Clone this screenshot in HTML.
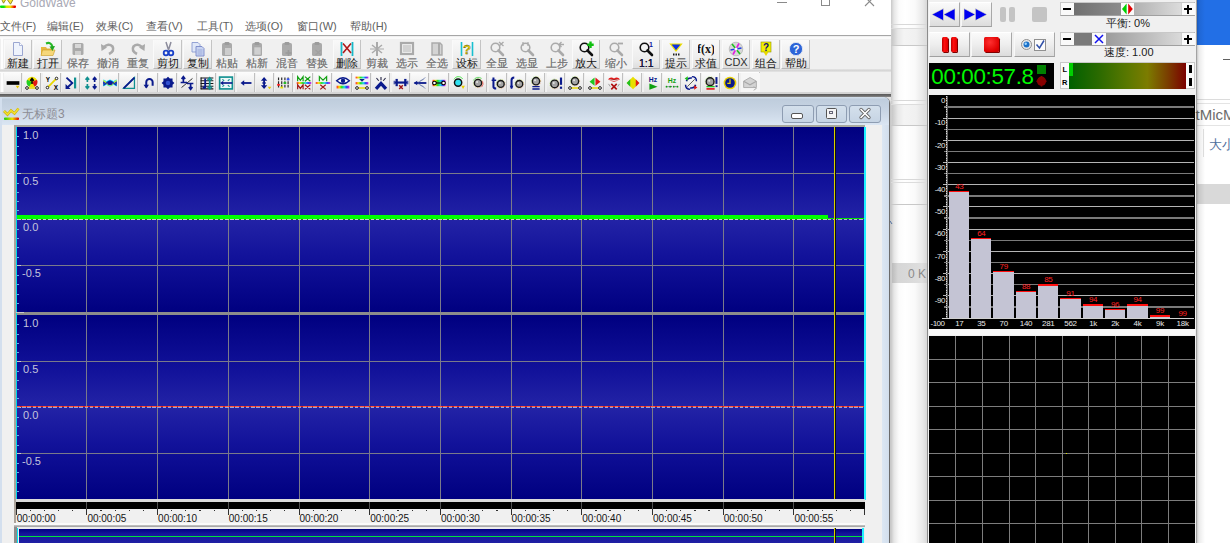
<!DOCTYPE html><html><head><meta charset="utf-8"><style>
*{margin:0;padding:0;box-sizing:border-box}
html,body{width:1230px;height:543px;overflow:hidden;background:#fff;font-family:"Liberation Sans",sans-serif}
.ab{position:absolute}
.t{position:absolute;white-space:nowrap;line-height:1}
</style></head><body>
<div class="ab" style="left:0px;top:0px;width:891px;height:36px;background:#fff"></div>
<svg class="ab" style="left:0;top:0" width="18" height="9"><path d="M0.5 -3 L3.5 3.2 L6.5 -1.5 L10.5 4.2 L14.5 -3Z" fill="#f6e838" stroke="#8c8420" stroke-width="0.9"/><defs><linearGradient id="cb" x1="0" x2="1"><stop offset="0" stop-color="#00e010"/><stop offset=".25" stop-color="#10e010"/><stop offset=".4" stop-color="#d0e800"/><stop offset=".65" stop-color="#f0e000"/><stop offset=".8" stop-color="#f06000"/><stop offset=".9" stop-color="#e80000"/><stop offset="1" stop-color="#e00000"/></linearGradient></defs><rect x="0" y="5.6" width="16" height="2.3" rx=".8" fill="url(#cb)"/></svg>
<div class="t" style="left:20px;top:-3.3px;font-size:12px;color:#a8a8b4">GoldWave</div>
<div class="ab" style="left:777px;top:2px;width:10px;height:1px;background:#8a8a8a"></div>
<div class="ab" style="left:821px;top:-3px;width:9px;height:9px;border:1px solid #8a8a8a"></div>
<svg class="ab" style="left:864px;top:-3px" width="11" height="10"><path d="M1 0 L10 9 M10 0 L1 9" stroke="#8a8a8a" stroke-width="1.1"/></svg>
<div class="t" style="left:0px;top:20.5px;font-size:11px;color:#606060">文件(F)</div>
<div class="t" style="left:47px;top:20.5px;font-size:11px;color:#606060">编辑(E)</div>
<div class="t" style="left:96px;top:20.5px;font-size:11px;color:#606060">效果(C)</div>
<div class="t" style="left:146px;top:20.5px;font-size:11px;color:#606060">查看(V)</div>
<div class="t" style="left:197px;top:20.5px;font-size:11px;color:#606060">工具(T)</div>
<div class="t" style="left:245px;top:20.5px;font-size:11px;color:#606060">选项(O)</div>
<div class="t" style="left:297px;top:20.5px;font-size:11px;color:#606060">窗口(W)</div>
<div class="t" style="left:350px;top:20.5px;font-size:11px;color:#606060">帮助(H)</div>
<div class="ab" style="left:0px;top:35px;width:891px;height:1px;background:#a6a6a6"></div>
<div class="ab" style="left:0px;top:36px;width:891px;height:60px;background:#f0f0f0"></div>
<div class="ab" style="left:0px;top:37px;width:891px;height:1.5px;background:#fafafa"></div>
<div class="ab" style="left:0px;top:69px;width:891px;height:3px;background:linear-gradient(#e4e4e4,#d4d4d4 60%,#e8e8e8)"></div>
<div class="ab" style="left:0px;top:72px;width:759.5px;height:1px;background:#fcfcfc"></div>
<div class="ab" style="left:759px;top:72px;width:1px;height:21px;background:#c8c8c8"></div>
<div class="ab" style="left:0px;top:92px;width:891px;height:1.2px;background:#cfcfcf"></div>
<div class="ab" style="left:1px;top:38px;width:2px;height:31px;background:#fdfdfd"></div>
<div class="ab" style="left:1px;top:73px;width:2px;height:19px;background:#fdfdfd"></div>
<div class="ab" style="left:741px;top:73px;width:18.5px;height:19px;background:#f6f6f6"></div>
<div class="ab" style="left:3.5px;top:40px;width:28.5px;height:29px;background:linear-gradient(#f9f9f9,#ececec 70%,#dedede);border-right:1px solid #c4c4c4;border-bottom:1px solid #b8b8b8;border-left:1px solid #fafafa"></div>
<svg class="ab" style="left:10.0px;top:41px" width="16" height="16" viewBox="0 0 16 16"><path d="M3.5 1.5 H9.5 L12.5 4.5 V14.5 H3.5Z" fill="#eef3fc" stroke="#9aa6d0" stroke-width="1"/><path d="M9.5 1.5 V4.5 H12.5" fill="#fff" stroke="#9aa6d0" stroke-width=".8"/></svg>
<div class="t" style="left:2.5px;top:57.5px;width:31px;text-align:center;font-size:11px;color:#141414">新建</div>
<div class="ab" style="left:33.42px;top:40px;width:28.5px;height:29px;background:linear-gradient(#f9f9f9,#ececec 70%,#dedede);border-right:1px solid #c4c4c4;border-bottom:1px solid #b8b8b8;border-left:1px solid #fafafa"></div>
<svg class="ab" style="left:39.92px;top:41px" width="16" height="16" viewBox="0 0 16 16"><path d="M1 6 H6 L7 7.5 H13 V14 H1Z" fill="#e8b640"/><path d="M2.5 9 H15 L13 14.5 H1Z" fill="#f6d77a" stroke="#c99a20" stroke-width=".6"/><path d="M6 2.5 Q11 0.5 12.5 6" fill="none" stroke="#28b828" stroke-width="2.2"/><path d="M9.5 5.5 L15 5 L12.5 10Z" fill="#20a820"/></svg>
<div class="t" style="left:32.42px;top:57.5px;width:31px;text-align:center;font-size:11px;color:#141414">打开</div>
<svg class="ab" style="left:69.84px;top:41px" width="16" height="16" viewBox="0 0 16 16"><rect x="2.5" y="2" width="11" height="12" rx="1.5" fill="#aaaaaa"/><rect x="5" y="3" width="6" height="4" fill="#d8d8d8"/><rect x="5" y="10" width="6" height="4" fill="#cfcfcf"/></svg>
<div class="t" style="left:62.34px;top:57.5px;width:31px;text-align:center;font-size:11px;text-shadow:0 0 .12px #7c7c7c;color:#7c7c7c">保存</div>
<svg class="ab" style="left:99.76px;top:41px" width="16" height="16" viewBox="0 0 16 16"><path d="M3.5 6.5 Q8.5 1.5 12.5 5.5 Q15 10 9 13" fill="none" stroke="#aaaaaa" stroke-width="2.6"/><path d="M1 3 L7 6.5 L1.5 10Z" fill="#aaaaaa"/></svg>
<div class="t" style="left:92.26px;top:57.5px;width:31px;text-align:center;font-size:11px;text-shadow:0 0 .12px #7c7c7c;color:#7c7c7c">撤消</div>
<svg class="ab" style="left:129.68px;top:41px" width="16" height="16" viewBox="0 0 16 16"><path d="M12.5 6.5 Q7.5 1.5 3.5 5.5 Q1 10 7 13" fill="none" stroke="#aaaaaa" stroke-width="2.6"/><path d="M15 3 L9 6.5 L14.5 10Z" fill="#aaaaaa"/></svg>
<div class="t" style="left:122.18px;top:57.5px;width:31px;text-align:center;font-size:11px;text-shadow:0 0 .12px #7c7c7c;color:#7c7c7c">重复</div>
<div class="ab" style="left:153.1px;top:40px;width:28.5px;height:29px;background:linear-gradient(#f9f9f9,#ececec 70%,#dedede);border-right:1px solid #c4c4c4;border-bottom:1px solid #b8b8b8;border-left:1px solid #fafafa"></div>
<svg class="ab" style="left:159.6px;top:41px" width="16" height="16" viewBox="0 0 16 16"><path d="M6 1 L8.5 9 M11 1 L8.5 9" stroke="#8c8c9c" stroke-width="1.5"/><circle cx="6" cy="12" r="2.3" fill="none" stroke="#1840c8" stroke-width="1.8"/><circle cx="11" cy="12" r="2.3" fill="none" stroke="#1840c8" stroke-width="1.8"/></svg>
<div class="t" style="left:152.1px;top:57.5px;width:31px;text-align:center;font-size:11px;color:#141414">剪切</div>
<div class="ab" style="left:183.02px;top:40px;width:28.5px;height:29px;background:linear-gradient(#f9f9f9,#ececec 70%,#dedede);border-right:1px solid #c4c4c4;border-bottom:1px solid #b8b8b8;border-left:1px solid #fafafa"></div>
<svg class="ab" style="left:189.52px;top:41px" width="16" height="16" viewBox="0 0 16 16"><path d="M2 1.5 H8 L10 3.5 V11 H2Z" fill="#dfe7f8" stroke="#8a9ad0" stroke-width=".9"/><path d="M6 5.5 H12 L14 7.5 V15 H6Z" fill="#c8d4f2" stroke="#7888c8" stroke-width=".9"/><path d="M7.5 9 H12.5 M7.5 11 H12.5 M7.5 13 H12.5" stroke="#8a9ad0" stroke-width=".7"/></svg>
<div class="t" style="left:182.02px;top:57.5px;width:31px;text-align:center;font-size:11px;color:#141414">复制</div>
<svg class="ab" style="left:219.44px;top:41px" width="16" height="16" viewBox="0 0 16 16"><rect x="3" y="2" width="10" height="13" rx="1.5" fill="#aaaaaa"/><rect x="5.5" y="1" width="5" height="3" rx="1" fill="#9c9c9c"/><rect x="6" y="7" width="6" height="7" fill="#cdcdcd"/></svg>
<div class="t" style="left:211.94px;top:57.5px;width:31px;text-align:center;font-size:11px;text-shadow:0 0 .12px #7c7c7c;color:#7c7c7c">粘贴</div>
<svg class="ab" style="left:249.36px;top:41px" width="16" height="16" viewBox="0 0 16 16"><rect x="3" y="2" width="10" height="13" rx="1.5" fill="#aaaaaa"/><rect x="5.5" y="1" width="5" height="3" rx="1" fill="#9c9c9c"/><rect x="5" y="6" width="7" height="8" fill="#d0d0d0" stroke="#a8a8a8" stroke-width=".6"/></svg>
<div class="t" style="left:241.86px;top:57.5px;width:31px;text-align:center;font-size:11px;text-shadow:0 0 .12px #7c7c7c;color:#7c7c7c">粘新</div>
<svg class="ab" style="left:279.28px;top:41px" width="16" height="16" viewBox="0 0 16 16"><rect x="3" y="2" width="10" height="13" rx="1.5" fill="#aaaaaa"/><rect x="5.5" y="1" width="5" height="3" rx="1" fill="#9c9c9c"/><path d="M9.5 9 V15 M6.5 12 H12.5" stroke="#9a9a9a" stroke-width="1.6"/></svg>
<div class="t" style="left:271.78px;top:57.5px;width:31px;text-align:center;font-size:11px;text-shadow:0 0 .12px #7c7c7c;color:#7c7c7c">混音</div>
<svg class="ab" style="left:309.2px;top:41px" width="16" height="16" viewBox="0 0 16 16"><rect x="3" y="2" width="10" height="13" rx="1.5" fill="#aaaaaa"/><rect x="5.5" y="1" width="5" height="3" rx="1" fill="#9c9c9c"/><path d="M6.5 9 L12 14 M12 9 L6.5 14" stroke="#a0a0a0" stroke-width="1.2"/></svg>
<div class="t" style="left:301.7px;top:57.5px;width:31px;text-align:center;font-size:11px;text-shadow:0 0 .12px #7c7c7c;color:#7c7c7c">替换</div>
<div class="ab" style="left:332.62px;top:40px;width:28.5px;height:29px;background:linear-gradient(#f9f9f9,#ececec 70%,#dedede);border-right:1px solid #c4c4c4;border-bottom:1px solid #b8b8b8;border-left:1px solid #fafafa"></div>
<svg class="ab" style="left:339.12px;top:41px" width="16" height="16" viewBox="0 0 16 16"><path d="M2.5 1 V15 M13.5 1 V15" stroke="#18b8c8" stroke-width="1.8"/><path d="M4 2.5 L12 12 M12 2.5 L4 12" stroke="#b01818" stroke-width="1.6"/></svg>
<div class="t" style="left:331.62px;top:57.5px;width:31px;text-align:center;font-size:11px;color:#141414">删除</div>
<svg class="ab" style="left:369.04px;top:41px" width="16" height="16" viewBox="0 0 16 16"><path d="M3 4 L13 12 M13 4 L3 12" stroke="#aaaaaa" stroke-width="1.5"/><path d="M8 1 V15" stroke="#aaaaaa" stroke-width="2"/><path d="M1 8 H15" stroke="#aaaaaa" stroke-width="1"/></svg>
<div class="t" style="left:361.54px;top:57.5px;width:31px;text-align:center;font-size:11px;text-shadow:0 0 .12px #7c7c7c;color:#7c7c7c">剪裁</div>
<svg class="ab" style="left:398.96px;top:41px" width="16" height="16" viewBox="0 0 16 16"><rect x="2" y="2" width="12" height="11" fill="none" stroke="#aaaaaa" stroke-width="2.2"/><rect x="4" y="4" width="8" height="7" fill="#d2d2d2"/></svg>
<div class="t" style="left:391.46px;top:57.5px;width:31px;text-align:center;font-size:11px;text-shadow:0 0 .12px #7c7c7c;color:#7c7c7c">选示</div>
<svg class="ab" style="left:428.88px;top:41px" width="16" height="16" viewBox="0 0 16 16"><path d="M3 2 H11 L13 4 V14 H3Z" fill="#d4d4d4" stroke="#aaaaaa" stroke-width="1.4"/><path d="M10 2 V14" stroke="#aaaaaa" stroke-width="2"/></svg>
<div class="t" style="left:421.38px;top:57.5px;width:31px;text-align:center;font-size:11px;text-shadow:0 0 .12px #7c7c7c;color:#7c7c7c">全选</div>
<div class="ab" style="left:452.3px;top:40px;width:28.5px;height:29px;background:linear-gradient(#f9f9f9,#ececec 70%,#dedede);border-right:1px solid #c4c4c4;border-bottom:1px solid #b8b8b8;border-left:1px solid #fafafa"></div>
<svg class="ab" style="left:458.8px;top:41px" width="16" height="16" viewBox="0 0 16 16"><path d="M2.5 1 V15 M13.5 1 V15" stroke="#18c0d0" stroke-width="1.6"/><text x="8" y="12.5" text-anchor="middle" font-family="Liberation Sans" font-weight="bold" font-size="13" fill="#e8d000" stroke="#404000" stroke-width=".3">?</text></svg>
<div class="t" style="left:451.3px;top:57.5px;width:31px;text-align:center;font-size:11px;color:#141414">设标</div>
<svg class="ab" style="left:488.72px;top:41px" width="16" height="16" viewBox="0 0 16 16"><circle cx="6.5" cy="6.5" r="4.3" fill="none" stroke="#aaaaaa" stroke-width="1.6"/><path d="M9.5 9.5 L14 14" stroke="#aaaaaa" stroke-width="2.6" stroke-linecap="round"/><path d="M10 1 L14.5 5 M14.5 1 L10 5" stroke="#aaaaaa" stroke-width="1.4"/></svg>
<div class="t" style="left:481.22px;top:57.5px;width:31px;text-align:center;font-size:11px;text-shadow:0 0 .12px #7c7c7c;color:#7c7c7c">全显</div>
<svg class="ab" style="left:518.64px;top:41px" width="16" height="16" viewBox="0 0 16 16"><circle cx="6.5" cy="6.5" r="4.3" fill="none" stroke="#aaaaaa" stroke-width="1.6"/><path d="M9.5 9.5 L14 14" stroke="#aaaaaa" stroke-width="2.6" stroke-linecap="round"/><path d="M4 1 V5 M9 1 V5" stroke="#aaaaaa" stroke-width="1.2"/></svg>
<div class="t" style="left:511.14px;top:57.5px;width:31px;text-align:center;font-size:11px;text-shadow:0 0 .12px #7c7c7c;color:#7c7c7c">选显</div>
<svg class="ab" style="left:548.56px;top:41px" width="16" height="16" viewBox="0 0 16 16"><circle cx="6.5" cy="6.5" r="4.3" fill="none" stroke="#aaaaaa" stroke-width="1.6"/><path d="M9.5 9.5 L14 14" stroke="#aaaaaa" stroke-width="2.6" stroke-linecap="round"/><path d="M15 3.5 H10.5 M12.5 1 L10 3.5 L12.5 6" stroke="#aaaaaa" stroke-width="1.3" fill="none"/></svg>
<div class="t" style="left:541.06px;top:57.5px;width:31px;text-align:center;font-size:11px;text-shadow:0 0 .12px #7c7c7c;color:#7c7c7c">上步</div>
<div class="ab" style="left:571.98px;top:40px;width:28.5px;height:29px;background:linear-gradient(#f9f9f9,#ececec 70%,#dedede);border-right:1px solid #c4c4c4;border-bottom:1px solid #b8b8b8;border-left:1px solid #fafafa"></div>
<svg class="ab" style="left:578.48px;top:41px" width="16" height="16" viewBox="0 0 16 16"><circle cx="6.5" cy="6.5" r="4.3" fill="none" stroke="#101010" stroke-width="1.6"/><path d="M9.5 9.5 L14 14" stroke="#101010" stroke-width="2.6" stroke-linecap="round"/><path d="M12.5 0.5 V7 M9.3 3.7 H15.7" stroke="#10c010" stroke-width="2.4"/></svg>
<div class="t" style="left:570.98px;top:57.5px;width:31px;text-align:center;font-size:11px;color:#141414">放大</div>
<svg class="ab" style="left:608.4px;top:41px" width="16" height="16" viewBox="0 0 16 16"><circle cx="6.5" cy="6.5" r="4.3" fill="none" stroke="#aaaaaa" stroke-width="1.6"/><path d="M9.5 9.5 L14 14" stroke="#aaaaaa" stroke-width="2.6" stroke-linecap="round"/><path d="M10 2.5 H15" stroke="#aaaaaa" stroke-width="1.8"/></svg>
<div class="t" style="left:600.9px;top:57.5px;width:31px;text-align:center;font-size:11px;text-shadow:0 0 .12px #7c7c7c;color:#7c7c7c">缩小</div>
<div class="ab" style="left:631.82px;top:40px;width:28.5px;height:29px;background:linear-gradient(#f9f9f9,#ececec 70%,#dedede);border-right:1px solid #c4c4c4;border-bottom:1px solid #b8b8b8;border-left:1px solid #fafafa"></div>
<svg class="ab" style="left:638.32px;top:41px" width="16" height="16" viewBox="0 0 16 16"><circle cx="6.5" cy="6.5" r="4.3" fill="none" stroke="#101010" stroke-width="1.6"/><path d="M9.5 9.5 L14 14" stroke="#101010" stroke-width="2.6" stroke-linecap="round"/><text x="13" y="6" text-anchor="middle" font-family="Liberation Sans" font-weight="bold" font-size="7" fill="#1020a0">1</text></svg>
<div class="t" style="left:630.82px;top:58px;width:31px;text-align:center;font-size:10.5px;color:#181848;text-shadow:0 0 .3px #000">1:1</div>
<div class="ab" style="left:661.74px;top:40px;width:28.5px;height:29px;background:linear-gradient(#f9f9f9,#ececec 70%,#dedede);border-right:1px solid #c4c4c4;border-bottom:1px solid #b8b8b8;border-left:1px solid #fafafa"></div>
<svg class="ab" style="left:668.24px;top:41px" width="16" height="16" viewBox="0 0 16 16"><path d="M2.5 3 H13.5 L8 10Z" fill="#1030e0" stroke="#f0e000" stroke-width="1.2"/><path d="M5 13.5 H6.5 M7.5 13.5 H9 M10 13.5 H11.5" stroke="#202020" stroke-width="1.8"/></svg>
<div class="t" style="left:660.74px;top:57.5px;width:31px;text-align:center;font-size:11px;color:#141414">提示</div>
<div class="ab" style="left:691.66px;top:40px;width:28.5px;height:29px;background:linear-gradient(#f9f9f9,#ececec 70%,#dedede);border-right:1px solid #c4c4c4;border-bottom:1px solid #b8b8b8;border-left:1px solid #fafafa"></div>
<svg class="ab" style="left:698.16px;top:41px" width="16" height="16" viewBox="0 0 16 16"><text x="8" y="12" text-anchor="middle" font-family="Liberation Serif" font-weight="bold" font-size="12" fill="#101010">f(x)</text></svg>
<div class="t" style="left:690.66px;top:57.5px;width:31px;text-align:center;font-size:11px;color:#141414">求值</div>
<div class="ab" style="left:721.58px;top:40px;width:28.5px;height:29px;background:linear-gradient(#f9f9f9,#ececec 70%,#dedede);border-right:1px solid #c4c4c4;border-bottom:1px solid #b8b8b8;border-left:1px solid #fafafa"></div>
<svg class="ab" style="left:728.08px;top:41px" width="16" height="16" viewBox="0 0 16 16"><circle cx="8" cy="8" r="6.8" fill="#d8d8d8" stroke="#a8a8a8" stroke-width=".6"/><path d="M4 3 L12 13" stroke="#20c020" stroke-width="1.6"/><path d="M11 2.5 L5 13.5" stroke="#e020e0" stroke-width="1.6"/><path d="M2.5 9 L13.5 7" stroke="#2040e0" stroke-width="1.4"/><circle cx="8" cy="8" r="1.6" fill="#fff"/></svg>
<div class="t" style="left:720.58px;top:57px;width:31px;text-align:center;font-size:11px;color:#303030">CDX</div>
<div class="ab" style="left:751.5px;top:40px;width:28.5px;height:29px;background:linear-gradient(#f9f9f9,#ececec 70%,#dedede);border-right:1px solid #c4c4c4;border-bottom:1px solid #b8b8b8;border-left:1px solid #fafafa"></div>
<svg class="ab" style="left:758.0px;top:41px" width="16" height="16" viewBox="0 0 16 16"><rect x="3" y="1" width="10" height="10" fill="#f0f000" stroke="#909000" stroke-width=".6"/><text x="8" y="9.5" text-anchor="middle" font-family="Liberation Sans" font-weight="bold" font-size="10" fill="#101070">?</text><path d="M5.5 11 H10.5 L8 15Z" fill="#e8d800"/></svg>
<div class="t" style="left:750.5px;top:57.5px;width:31px;text-align:center;font-size:11px;color:#141414">组合</div>
<div class="ab" style="left:781.42px;top:40px;width:28.5px;height:29px;background:linear-gradient(#f9f9f9,#ececec 70%,#dedede);border-right:1px solid #c4c4c4;border-bottom:1px solid #b8b8b8;border-left:1px solid #fafafa"></div>
<svg class="ab" style="left:787.92px;top:41px" width="16" height="16" viewBox="0 0 16 16"><circle cx="8" cy="8" r="6.6" fill="#2c64d8" stroke="#d8e0f0" stroke-width="1"/><text x="8" y="12.3" text-anchor="middle" font-family="Liberation Sans" font-weight="bold" font-size="11" fill="#fff">?</text></svg>
<div class="t" style="left:780.42px;top:57.5px;width:31px;text-align:center;font-size:11px;color:#141414">帮助</div>
<div class="ab" style="left:3.9px;top:73px;width:18.2px;height:20px;background:linear-gradient(#fbfbfb,#ededed 60%,#e2e2e2);border-right:1px solid #c0c0c0;border-bottom:1px solid #b4b4b4"></div>
<svg class="ab" style="left:5.00px;top:75px" width="16" height="16" viewBox="-0.8 -0.8 17.6 17.6"><defs><linearGradient id="spk" x1="0" y1="0" x2="1" y2="1"><stop offset="0" stop-color="#30d030"/><stop offset=".5" stop-color="#e8e000"/><stop offset="1" stop-color="#e03030"/></linearGradient></defs><rect x="1" y="6" width="14" height="4" fill="#000"/><path d="M11 11 H15 L13 14Z" fill="#e8c800"/></svg>
<div class="ab" style="left:23.29px;top:73px;width:18.2px;height:20px;background:linear-gradient(#fbfbfb,#ededed 60%,#e2e2e2);border-right:1px solid #c0c0c0;border-bottom:1px solid #b4b4b4"></div>
<svg class="ab" style="left:24.39px;top:75px" width="16" height="16" viewBox="-0.8 -0.8 17.6 17.6"><circle cx="8" cy="7" r="5.8" fill="#f0e000"/><path d="M8 7 L2.5 4.5 A5.8 5.8 0 0 0 5 12 Z" fill="#20d020"/><path d="M8 7 L13.5 4.5 A5.8 5.8 0 0 1 11 12 Z" fill="#e01818"/><path d="M8 9 V3.5 M6 5.5 L8 3 L10 5.5" stroke="#000" stroke-width="1.6" fill="none"/><path d="M3 13.5 H13" stroke="#e8d800" stroke-width="1.6"/><circle cx="2.5" cy="13.5" r="1.5" fill="#fff" stroke="#101010" stroke-width="1"/><circle cx="13.5" cy="13.5" r="1.5" fill="#fff" stroke="#101010" stroke-width="1"/></svg>
<div class="ab" style="left:42.67px;top:73px;width:18.2px;height:20px;background:linear-gradient(#fbfbfb,#ededed 60%,#e2e2e2);border-right:1px solid #c0c0c0;border-bottom:1px solid #b4b4b4"></div>
<svg class="ab" style="left:43.77px;top:75px" width="16" height="16" viewBox="-0.8 -0.8 17.6 17.6"><text x="1" y="7" font-family="Liberation Sans" font-weight="bold" font-size="7" fill="#000">Y</text><text x="10" y="15.5" font-family="Liberation Sans" font-weight="bold" font-size="7" fill="#000">X</text><path d="M3 13 L13 3" stroke="#e8d800" stroke-width="2"/><circle cx="3" cy="13" r="1.4" fill="#fff" stroke="#000" stroke-width=".9"/><circle cx="13" cy="3" r="1.4" fill="#fff" stroke="#000" stroke-width=".9"/></svg>
<div class="ab" style="left:62.05px;top:73px;width:18.2px;height:20px;background:linear-gradient(#fbfbfb,#ededed 60%,#e2e2e2);border-right:1px solid #c0c0c0;border-bottom:1px solid #b4b4b4"></div>
<svg class="ab" style="left:63.16px;top:75px" width="16" height="16" viewBox="-0.8 -0.8 17.6 17.6"><path d="M3 2 L9.5 8 L4 13" stroke="#0a1a8c" stroke-width="2" fill="none"/><path d="M2 9 V14.5 H7.5Z" fill="#0a1a8c"/><path d="M12.5 2 V14" stroke="#109090" stroke-width="2.4"/></svg>
<div class="ab" style="left:81.44px;top:73px;width:18.2px;height:20px;background:linear-gradient(#fbfbfb,#ededed 60%,#e2e2e2);border-right:1px solid #c0c0c0;border-bottom:1px solid #b4b4b4"></div>
<svg class="ab" style="left:82.54px;top:75px" width="16" height="16" viewBox="-0.8 -0.8 17.6 17.6"><path d="M4 2 V7 M2 4.5 L4 2 L6 4.5 M4 9 V14 M2 11.5 L4 14 L6 11.5" stroke="#109090" stroke-width="1.8" fill="none"/><path d="M12 2 V7 M10 4.5 L12 2 L14 4.5 M12 9 V14 M10 11.5 L12 14 L14 11.5" stroke="#0a1a8c" stroke-width="1.8" fill="none"/></svg>
<div class="ab" style="left:100.83px;top:73px;width:18.2px;height:20px;background:linear-gradient(#fbfbfb,#ededed 60%,#e2e2e2);border-right:1px solid #c0c0c0;border-bottom:1px solid #b4b4b4"></div>
<svg class="ab" style="left:101.93px;top:75px" width="16" height="16" viewBox="-0.8 -0.8 17.6 17.6"><path d="M0.5 10.5 C3 10.5 5 5.5 8 5.5 C11 5.5 13 10.5 15.5 10.5 M0.5 5.5 C3 5.5 5 10.5 8 10.5 C11 10.5 13 5.5 15.5 5.5" stroke="#30e8f8" stroke-width="2.6" fill="none"/><path d="M0.5 5.5 C3 5.5 5 10.5 8 10.5 C11 10.5 13 5.5 15.5 5.5" stroke="#e8e800" stroke-width="1.3" fill="none"/><path d="M0.5 10.5 C3 10.5 5 5.5 8 5.5 C11 5.5 13 10.5 15.5 10.5" stroke="#0a1aa0" stroke-width="1.3" fill="none"/><ellipse cx="8" cy="8" rx="3" ry="2.3" fill="#0a1aa0"/><path d="M0.5 6 L3 8 L0.5 10Z M15.5 6 L13 8 L15.5 10Z" fill="#0a1aa0"/></svg>
<div class="ab" style="left:120.21px;top:73px;width:18.2px;height:20px;background:linear-gradient(#fbfbfb,#ededed 60%,#e2e2e2);border-right:1px solid #c0c0c0;border-bottom:1px solid #b4b4b4"></div>
<svg class="ab" style="left:121.31px;top:75px" width="16" height="16" viewBox="-0.8 -0.8 17.6 17.6"><path d="M2 14 L14 2 V14Z" fill="none" stroke="#109090" stroke-width="1.4"/><path d="M2 14 L14 2" stroke="#0a1a8c" stroke-width="2"/></svg>
<div class="ab" style="left:139.6px;top:73px;width:18.2px;height:20px;background:linear-gradient(#fbfbfb,#ededed 60%,#e2e2e2);border-right:1px solid #c0c0c0;border-bottom:1px solid #b4b4b4"></div>
<svg class="ab" style="left:140.70px;top:75px" width="16" height="16" viewBox="-0.8 -0.8 17.6 17.6"><path d="M5 13 V7 A3.5 3.5 0 0 1 12 7 V11" stroke="#0a1a8c" stroke-width="2.2" fill="none"/><path d="M2 10 L5 14 L8 10Z" fill="#0a1a8c"/></svg>
<div class="ab" style="left:158.98px;top:73px;width:18.2px;height:20px;background:linear-gradient(#fbfbfb,#ededed 60%,#e2e2e2);border-right:1px solid #c0c0c0;border-bottom:1px solid #b4b4b4"></div>
<svg class="ab" style="left:160.08px;top:75px" width="16" height="16" viewBox="-0.8 -0.8 17.6 17.6"><path d="M8 1 L10 3 L13 3 L13 6 L15 8 L13 10 L13 13 L10 13 L8 15 L6 13 L3 13 L3 10 L1 8 L3 6 L3 3 L6 3Z" fill="#0a1a8c"/><circle cx="8" cy="8" r="2.5" fill="#3050d0"/></svg>
<div class="ab" style="left:178.37px;top:73px;width:18.2px;height:20px;background:linear-gradient(#fbfbfb,#ededed 60%,#e2e2e2);border-right:1px solid #c0c0c0;border-bottom:1px solid #b4b4b4"></div>
<svg class="ab" style="left:179.47px;top:75px" width="16" height="16" viewBox="-0.8 -0.8 17.6 17.6"><path d="M4 1 V8 M2 3.5 L4 1 L6 3.5" stroke="#0a1a8c" stroke-width="1.8" fill="none"/><path d="M12 8 V15 M10 12.5 L12 15 L14 12.5" stroke="#0a1a8c" stroke-width="1.8" fill="none"/><path d="M2 13 L14 3" stroke="#202020" stroke-width="1"/><path d="M1 7.5 H8 M8 8.5 H15" stroke="#0a1a8c" stroke-width="1.6"/></svg>
<div class="ab" style="left:197.75px;top:73px;width:18.2px;height:20px;background:linear-gradient(#fbfbfb,#ededed 60%,#e2e2e2);border-right:1px solid #c0c0c0;border-bottom:1px solid #b4b4b4"></div>
<svg class="ab" style="left:198.85px;top:75px" width="16" height="16" viewBox="-0.8 -0.8 17.6 17.6"><path d="M1 2.5 H15 M1 5.5 H15 M1 8.5 H15 M1 11.5 H15 M1 14.5 H15" stroke="#181818" stroke-width="1.2"/><path d="M1.5 2 V15" stroke="#181818" stroke-width="1.2"/><path d="M6 3 V13" stroke="#0a1a8c" stroke-width="2"/><ellipse cx="5" cy="13" rx="2" ry="1.5" fill="#0a1a8c"/><path d="M11 3 V14" stroke="#109090" stroke-width="2"/><path d="M8.5 5 L11 2 L13.5 5 M8.5 12 L11 15 L13.5 12" stroke="#109090" stroke-width="1.4" fill="none"/></svg>
<div class="ab" style="left:217.14px;top:73px;width:18.2px;height:20px;background:linear-gradient(#fbfbfb,#ededed 60%,#e2e2e2);border-right:1px solid #c0c0c0;border-bottom:1px solid #b4b4b4"></div>
<svg class="ab" style="left:218.24px;top:75px" width="16" height="16" viewBox="-0.8 -0.8 17.6 17.6"><rect x="1" y="1.5" width="14" height="13" fill="#eef8f8" stroke="#109090" stroke-width="1.8"/><path d="M4 8 H15" stroke="#0a1a8c" stroke-width="1.8"/><path d="M1.5 8 L5 5.5 V10.5Z" fill="#0a1a8c"/><path d="M4 4 L6 5.5 M12 4 L10 5.5 M4 12 L6 10.5 M12 12 L10 10.5" stroke="#109090" stroke-width="1.2"/></svg>
<div class="ab" style="left:236.52px;top:73px;width:18.2px;height:20px;background:linear-gradient(#fbfbfb,#ededed 60%,#e2e2e2);border-right:1px solid #c0c0c0;border-bottom:1px solid #b4b4b4"></div>
<svg class="ab" style="left:237.62px;top:75px" width="16" height="16" viewBox="-0.8 -0.8 17.6 17.6"><path d="M4 8 H14" stroke="#0a1a8c" stroke-width="2"/><path d="M2 8 L6 5 V11Z" fill="#0a1a8c"/></svg>
<div class="ab" style="left:255.91px;top:73px;width:18.2px;height:20px;background:linear-gradient(#fbfbfb,#ededed 60%,#e2e2e2);border-right:1px solid #c0c0c0;border-bottom:1px solid #b4b4b4"></div>
<svg class="ab" style="left:257.01px;top:75px" width="16" height="16" viewBox="-0.8 -0.8 17.6 17.6"><path d="M7 3 V13" stroke="#0a1a8c" stroke-width="2"/><path d="M3.5 5.5 L7 1.5 L10.5 5.5Z M3.5 10.5 L7 14.5 L10.5 10.5Z" fill="#0a1a8c"/><path d="M5 8 H9" stroke="#0a1a8c" stroke-width="1.4"/><path d="M11 12 H15 L13 15Z" fill="#e8c800"/></svg>
<div class="ab" style="left:275.29px;top:73px;width:18.2px;height:20px;background:linear-gradient(#fbfbfb,#ededed 60%,#e2e2e2);border-right:1px solid #c0c0c0;border-bottom:1px solid #b4b4b4"></div>
<svg class="ab" style="left:276.39px;top:75px" width="16" height="16" viewBox="-0.8 -0.8 17.6 17.6"><path d="M2 2 V14 M5.5 2 V14 M9 2 V14 M12.5 2 V14" stroke="#282828" stroke-width="1.3" stroke-dasharray="3 1"/><rect x="0.5" y="9" width="3" height="2" fill="#ff2020"/><rect x="4" y="12" width="3" height="2" fill="#e8e000"/><rect x="7.5" y="7" width="3" height="2" fill="#20c020"/><rect x="11" y="3" width="3" height="2" fill="#3050ff"/></svg>
<div class="ab" style="left:294.68px;top:73px;width:18.2px;height:20px;background:linear-gradient(#fbfbfb,#ededed 60%,#e2e2e2);border-right:1px solid #c0c0c0;border-bottom:1px solid #b4b4b4"></div>
<svg class="ab" style="left:295.78px;top:75px" width="16" height="16" viewBox="-0.8 -0.8 17.6 17.6"><defs><linearGradient id="rb" x1="0" x2="1"><stop offset="0" stop-color="#ff2020"/><stop offset=".2" stop-color="#ffe000"/><stop offset=".4" stop-color="#20e020"/><stop offset=".6" stop-color="#20e0e0"/><stop offset=".8" stop-color="#2040ff"/><stop offset="1" stop-color="#e020e0"/></linearGradient></defs><path d="M1 6 V1 L4 5 L7 1 V6 M9 1 L15 6 M15 1 L9 6" stroke="#10a010" stroke-width="1.3" fill="none"/><rect x="0" y="7" width="16" height="2" fill="url(#rb)"/><path d="M1 15 V10 L4 14 L7 10 V15 M9 10 L15 15 M15 10 L9 15" stroke="#a01818" stroke-width="1.3" fill="none"/></svg>
<div class="ab" style="left:314.06px;top:73px;width:18.2px;height:20px;background:linear-gradient(#fbfbfb,#ededed 60%,#e2e2e2);border-right:1px solid #c0c0c0;border-bottom:1px solid #b4b4b4"></div>
<svg class="ab" style="left:315.16px;top:75px" width="16" height="16" viewBox="-0.8 -0.8 17.6 17.6"><defs><linearGradient id="rb" x1="0" x2="1"><stop offset="0" stop-color="#ff2020"/><stop offset=".2" stop-color="#ffe000"/><stop offset=".4" stop-color="#20e020"/><stop offset=".6" stop-color="#20e0e0"/><stop offset=".8" stop-color="#2040ff"/><stop offset="1" stop-color="#e020e0"/></linearGradient></defs><path d="M4 6 V1 L8 5 L12 1 V6" stroke="#10a010" stroke-width="1.3" fill="none"/><rect x="0" y="7" width="16" height="2" fill="url(#rb)"/><path d="M5 10 L11 15 M11 10 L5 15" stroke="#a01818" stroke-width="1.3"/></svg>
<div class="ab" style="left:333.44px;top:73px;width:18.2px;height:20px;background:linear-gradient(#fbfbfb,#ededed 60%,#e2e2e2);border-right:1px solid #c0c0c0;border-bottom:1px solid #b4b4b4"></div>
<svg class="ab" style="left:334.55px;top:75px" width="16" height="16" viewBox="-0.8 -0.8 17.6 17.6"><defs><linearGradient id="rb" x1="0" x2="1"><stop offset="0" stop-color="#ff2020"/><stop offset=".2" stop-color="#ffe000"/><stop offset=".4" stop-color="#20e020"/><stop offset=".6" stop-color="#20e0e0"/><stop offset=".8" stop-color="#2040ff"/><stop offset="1" stop-color="#e020e0"/></linearGradient></defs><path d="M1 5.5 Q8 -1 15 5.5 Q8 12 1 5.5Z" fill="#ffffff" stroke="#0a1a8c" stroke-width="1.6"/><circle cx="8" cy="5.5" r="2.4" fill="#0a1a8c"/><rect x="1" y="11" width="14" height="3" fill="url(#rb)"/></svg>
<div class="ab" style="left:352.83px;top:73px;width:18.2px;height:20px;background:linear-gradient(#fbfbfb,#ededed 60%,#e2e2e2);border-right:1px solid #c0c0c0;border-bottom:1px solid #b4b4b4"></div>
<svg class="ab" style="left:353.93px;top:75px" width="16" height="16" viewBox="-0.8 -0.8 17.6 17.6"><defs><linearGradient id="rb" x1="0" x2="1"><stop offset="0" stop-color="#ff2020"/><stop offset=".2" stop-color="#ffe000"/><stop offset=".4" stop-color="#20e020"/><stop offset=".6" stop-color="#20e0e0"/><stop offset=".8" stop-color="#2040ff"/><stop offset="1" stop-color="#e020e0"/></linearGradient></defs><rect x="1" y="1" width="14" height="2" fill="url(#rb)"/><path d="M5 3.5 H11 L8 6.5Z" fill="#0a1a8c"/><rect x="1" y="7" width="14" height="2.5" fill="url(#rb)"/><path d="M3 13.5 H13" stroke="#e8d800" stroke-width="1.6"/><circle cx="2.5" cy="13.5" r="1.5" fill="#fff" stroke="#101010" stroke-width="1"/><circle cx="13.5" cy="13.5" r="1.5" fill="#fff" stroke="#101010" stroke-width="1"/></svg>
<div class="ab" style="left:372.22px;top:73px;width:18.2px;height:20px;background:linear-gradient(#fbfbfb,#ededed 60%,#e2e2e2);border-right:1px solid #c0c0c0;border-bottom:1px solid #b4b4b4"></div>
<svg class="ab" style="left:373.32px;top:75px" width="16" height="16" viewBox="-0.8 -0.8 17.6 17.6"><path d="M2.5 14.5 L8 8.5 L13.5 14.5" stroke="#0a1a8c" stroke-width="3.6" fill="none"/><path d="M8 1.5 V5 M3 2.5 L5.5 5.5 M13 2.5 L10.5 5.5" stroke="#202040" stroke-width="1.2"/></svg>
<div class="ab" style="left:391.6px;top:73px;width:18.2px;height:20px;background:linear-gradient(#fbfbfb,#ededed 60%,#e2e2e2);border-right:1px solid #c0c0c0;border-bottom:1px solid #b4b4b4"></div>
<svg class="ab" style="left:392.70px;top:75px" width="16" height="16" viewBox="-0.8 -0.8 17.6 17.6"><path d="M1 7.5 H15" stroke="#0a1a8c" stroke-width="2.4"/><rect x="2" y="3.5" width="2.5" height="8" fill="#0a1a8c"/><rect x="11.5" y="3.5" width="2.5" height="8" fill="#0a1a8c"/><path d="M0.5 5.5 V9.5 M15.5 5.5 V9.5" stroke="#0a1a8c" stroke-width="1"/><path d="M6 10.5 L10 14.5 M10 10.5 L6 14.5" stroke="#a01818" stroke-width="1.6"/></svg>
<div class="ab" style="left:410.99px;top:73px;width:18.2px;height:20px;background:linear-gradient(#fbfbfb,#ededed 60%,#e2e2e2);border-right:1px solid #c0c0c0;border-bottom:1px solid #b4b4b4"></div>
<svg class="ab" style="left:412.09px;top:75px" width="16" height="16" viewBox="-0.8 -0.8 17.6 17.6"><path d="M2 8 H15" stroke="#0a1a8c" stroke-width="2"/><path d="M1 8 L5 5.5 V10.5Z" fill="#0a1a8c"/><path d="M8 6 L14 2 M8 10 L14 14 M6 7 L12 4 M6 9 L12 12" stroke="#7080b0" stroke-width=".8"/></svg>
<div class="ab" style="left:430.37px;top:73px;width:18.2px;height:20px;background:linear-gradient(#fbfbfb,#ededed 60%,#e2e2e2);border-right:1px solid #c0c0c0;border-bottom:1px solid #b4b4b4"></div>
<svg class="ab" style="left:431.47px;top:75px" width="16" height="16" viewBox="-0.8 -0.8 17.6 17.6"><defs><linearGradient id="rb" x1="0" x2="1"><stop offset="0" stop-color="#ff2020"/><stop offset=".2" stop-color="#ffe000"/><stop offset=".4" stop-color="#20e020"/><stop offset=".6" stop-color="#20e0e0"/><stop offset=".8" stop-color="#2040ff"/><stop offset="1" stop-color="#e020e0"/></linearGradient></defs><rect x="1" y="4.5" width="14" height="7" fill="url(#rb)"/><path d="M3 8 H13" stroke="#101010" stroke-width="1.4"/><circle cx="3" cy="8" r="2" fill="#fff" stroke="#000" stroke-width="1.2"/><circle cx="13" cy="8" r="2" fill="#fff" stroke="#000" stroke-width="1.2"/></svg>
<div class="ab" style="left:449.75px;top:73px;width:18.2px;height:20px;background:linear-gradient(#fbfbfb,#ededed 60%,#e2e2e2);border-right:1px solid #c0c0c0;border-bottom:1px solid #b4b4b4"></div>
<svg class="ab" style="left:450.86px;top:75px" width="16" height="16" viewBox="-0.8 -0.8 17.6 17.6"><path d="M2.5 4 A5.5 5.5 0 0 1 12 3.5" stroke="#40e040" stroke-width="1" fill="none"/><circle cx="7" cy="7.5" r="4" fill="#30e0f0" stroke="#101010" stroke-width="1.6"/><path d="M10.5 11 H14.5 L12.5 14.5Z" fill="#e8d000"/></svg>
<div class="ab" style="left:469.14px;top:73px;width:18.2px;height:20px;background:linear-gradient(#fbfbfb,#ededed 60%,#e2e2e2);border-right:1px solid #c0c0c0;border-bottom:1px solid #b4b4b4"></div>
<svg class="ab" style="left:470.24px;top:75px" width="16" height="16" viewBox="-0.8 -0.8 17.6 17.6"><circle cx="8" cy="8" r="5.1" fill="none" stroke="url(#spk)" stroke-width=".7" stroke-dasharray="1 1" opacity=".8"/><circle cx="8" cy="8" r="4" fill="#a4a4a4" stroke="#181818" stroke-width="1.5"/><circle cx="7" cy="7" r="1.1" fill="#e4e4e4"/><path d="M3 5 A6 6 0 0 1 12 3" stroke="#40d040" stroke-width=".8" fill="none"/><path d="M13 6 A6 6 0 0 1 12 12.5" stroke="#e04040" stroke-width=".8" fill="none"/></svg>
<div class="ab" style="left:488.53px;top:73px;width:18.2px;height:20px;background:linear-gradient(#fbfbfb,#ededed 60%,#e2e2e2);border-right:1px solid #c0c0c0;border-bottom:1px solid #b4b4b4"></div>
<svg class="ab" style="left:489.63px;top:75px" width="16" height="16" viewBox="-0.8 -0.8 17.6 17.6"><path d="M3 2 V12 Q3 14 6 14" stroke="#0a1a8c" stroke-width="2.2" fill="none"/><path d="M1 5 H6" stroke="#0a1a8c" stroke-width="1.6"/><circle cx="11" cy="9" r="4.9" fill="none" stroke="url(#spk)" stroke-width=".7" stroke-dasharray="1 1" opacity=".8"/><circle cx="11" cy="9" r="3.8" fill="#a4a4a4" stroke="#181818" stroke-width="1.5"/><circle cx="10" cy="8" r="1.1" fill="#e4e4e4"/></svg>
<div class="ab" style="left:507.91px;top:73px;width:18.2px;height:20px;background:linear-gradient(#fbfbfb,#ededed 60%,#e2e2e2);border-right:1px solid #c0c0c0;border-bottom:1px solid #b4b4b4"></div>
<svg class="ab" style="left:509.01px;top:75px" width="16" height="16" viewBox="-0.8 -0.8 17.6 17.6"><path d="M5 2 Q2 2 2 5 V14" stroke="#0a1a8c" stroke-width="2.2" fill="none"/><path d="M0 11 L2 14.5 L4 11Z" fill="#0a1a8c"/><circle cx="10.5" cy="9" r="4.9" fill="none" stroke="url(#spk)" stroke-width=".7" stroke-dasharray="1 1" opacity=".8"/><circle cx="10.5" cy="9" r="3.8" fill="#a4a4a4" stroke="#181818" stroke-width="1.5"/><circle cx="9.5" cy="8" r="1.1" fill="#e4e4e4"/></svg>
<div class="ab" style="left:527.3px;top:73px;width:18.2px;height:20px;background:linear-gradient(#fbfbfb,#ededed 60%,#e2e2e2);border-right:1px solid #c0c0c0;border-bottom:1px solid #b4b4b4"></div>
<svg class="ab" style="left:528.40px;top:75px" width="16" height="16" viewBox="-0.8 -0.8 17.6 17.6"><circle cx="8" cy="6" r="5.1" fill="none" stroke="url(#spk)" stroke-width=".7" stroke-dasharray="1 1" opacity=".8"/><circle cx="8" cy="6" r="4" fill="#a4a4a4" stroke="#181818" stroke-width="1.5"/><circle cx="7" cy="5" r="1.1" fill="#e4e4e4"/><path d="M4 12 H12 M4 14.5 H12" stroke="#0a1a8c" stroke-width="1.6"/></svg>
<div class="ab" style="left:546.68px;top:73px;width:18.2px;height:20px;background:linear-gradient(#fbfbfb,#ededed 60%,#e2e2e2);border-right:1px solid #c0c0c0;border-bottom:1px solid #b4b4b4"></div>
<svg class="ab" style="left:547.78px;top:75px" width="16" height="16" viewBox="-0.8 -0.8 17.6 17.6"><circle cx="6.5" cy="9" r="5.300000000000001" fill="none" stroke="url(#spk)" stroke-width=".7" stroke-dasharray="1 1" opacity=".8"/><circle cx="6.5" cy="9" r="4.2" fill="#a4a4a4" stroke="#181818" stroke-width="1.5"/><circle cx="5.5" cy="8" r="1.1" fill="#e4e4e4"/><path d="M13.5 2 V10" stroke="#0a1a8c" stroke-width="2.4"/><rect x="12.3" y="12" width="2.4" height="2.4" fill="#0a1a8c"/></svg>
<div class="ab" style="left:566.07px;top:73px;width:18.2px;height:20px;background:linear-gradient(#fbfbfb,#ededed 60%,#e2e2e2);border-right:1px solid #c0c0c0;border-bottom:1px solid #b4b4b4"></div>
<svg class="ab" style="left:567.17px;top:75px" width="16" height="16" viewBox="-0.8 -0.8 17.6 17.6"><circle cx="8" cy="6" r="5.1" fill="none" stroke="url(#spk)" stroke-width=".7" stroke-dasharray="1 1" opacity=".8"/><circle cx="8" cy="6" r="4" fill="#a4a4a4" stroke="#181818" stroke-width="1.5"/><circle cx="7" cy="5" r="1.1" fill="#e4e4e4"/><path d="M3 13.5 H13" stroke="#e8d800" stroke-width="1.6"/><circle cx="2.5" cy="13.5" r="1.5" fill="#fff" stroke="#101010" stroke-width="1"/><circle cx="13.5" cy="13.5" r="1.5" fill="#fff" stroke="#101010" stroke-width="1"/></svg>
<div class="ab" style="left:585.45px;top:73px;width:18.2px;height:20px;background:linear-gradient(#fbfbfb,#ededed 60%,#e2e2e2);border-right:1px solid #c0c0c0;border-bottom:1px solid #b4b4b4"></div>
<svg class="ab" style="left:586.55px;top:75px" width="16" height="16" viewBox="-0.8 -0.8 17.6 17.6"><path d="M7.5 2 L2 6.5 L7.5 11Z" fill="#20c820"/><path d="M8.5 2 L14 6.5 L8.5 11Z" fill="#e01818"/><path d="M3 13.5 H13" stroke="#e8d800" stroke-width="1.6"/><circle cx="2.5" cy="13.5" r="1.5" fill="#fff" stroke="#101010" stroke-width="1"/><circle cx="13.5" cy="13.5" r="1.5" fill="#fff" stroke="#101010" stroke-width="1"/></svg>
<div class="ab" style="left:604.84px;top:73px;width:18.2px;height:20px;background:linear-gradient(#fbfbfb,#ededed 60%,#e2e2e2);border-right:1px solid #c0c0c0;border-bottom:1px solid #b4b4b4"></div>
<svg class="ab" style="left:605.94px;top:75px" width="16" height="16" viewBox="-0.8 -0.8 17.6 17.6"><path d="M1.5 4 Q4 0.5 8 3 Q12 0.5 14.5 4 Q8 9 1.5 4Z" fill="#e01818"/><path d="M3 4.5 Q8 6 13 4.5" stroke="#fff" stroke-width="1"/><path d="M5 9 L11 15 M11 9 L5 15" stroke="#b01010" stroke-width="1.8"/><path d="M2 9 L4 12 M14 9 L12 12" stroke="#808080" stroke-width=".8"/></svg>
<div class="ab" style="left:624.22px;top:73px;width:18.2px;height:20px;background:linear-gradient(#fbfbfb,#ededed 60%,#e2e2e2);border-right:1px solid #c0c0c0;border-bottom:1px solid #b4b4b4"></div>
<svg class="ab" style="left:625.32px;top:75px" width="16" height="16" viewBox="-0.8 -0.8 17.6 17.6"><path d="M8 1 L15 8 L8 15 L1 8Z" fill="#e8e000"/><path d="M1 8 L5 4 V12Z" fill="#20c020"/><path d="M15 8 L11 4 V12Z" fill="#e01818"/></svg>
<div class="ab" style="left:643.61px;top:73px;width:18.2px;height:20px;background:linear-gradient(#fbfbfb,#ededed 60%,#e2e2e2);border-right:1px solid #c0c0c0;border-bottom:1px solid #b4b4b4"></div>
<svg class="ab" style="left:644.71px;top:75px" width="16" height="16" viewBox="-0.8 -0.8 17.6 17.6"><text x="8" y="7" text-anchor="middle" font-family="Liberation Sans" font-weight="bold" font-size="7.5" fill="#0a1a8c">Hz</text><path d="M4 8.5 L13 12 L4 15.5Z" fill="#10a010"/></svg>
<div class="ab" style="left:662.99px;top:73px;width:18.2px;height:20px;background:linear-gradient(#fbfbfb,#ededed 60%,#e2e2e2);border-right:1px solid #c0c0c0;border-bottom:1px solid #b4b4b4"></div>
<svg class="ab" style="left:664.09px;top:75px" width="16" height="16" viewBox="-0.8 -0.8 17.6 17.6"><text x="8" y="8" text-anchor="middle" font-family="Liberation Sans" font-weight="bold" font-size="7.5" fill="#10a010">Hz</text><path d="M1.5 12 H14.5" stroke="#406060" stroke-width="1" stroke-dasharray="1.5 1"/><circle cx="2" cy="12" r="1" fill="#10a010"/><circle cx="6" cy="12" r="1" fill="#10a010"/><circle cx="10" cy="12" r="1" fill="#10a010"/><circle cx="14" cy="12" r="1" fill="#10a010"/></svg>
<div class="ab" style="left:682.38px;top:73px;width:18.2px;height:20px;background:linear-gradient(#fbfbfb,#ededed 60%,#e2e2e2);border-right:1px solid #c0c0c0;border-bottom:1px solid #b4b4b4"></div>
<svg class="ab" style="left:683.48px;top:75px" width="16" height="16" viewBox="-0.8 -0.8 17.6 17.6"><path d="M3 6 Q4 2 9 2.5" stroke="#0a1a8c" stroke-width="1.8" fill="none"/><path d="M13 10 Q12 14 7 13.5" stroke="#0a1a8c" stroke-width="1.8" fill="none"/><path d="M1 3 L4.5 0.5 V5.5Z" fill="#20c020"/><path d="M15 13 L11.5 10.5 V15.5Z" fill="#e01818"/><path d="M4 12 L12 4" stroke="#505050" stroke-width="1"/><path d="M9 1 Q14 1 14 6" stroke="#0a1a8c" stroke-width="1.6" fill="none"/><path d="M7 15 Q2 15 2 10" stroke="#0a1a8c" stroke-width="1.6" fill="none"/></svg>
<div class="ab" style="left:701.76px;top:73px;width:18.2px;height:20px;background:linear-gradient(#fbfbfb,#ededed 60%,#e2e2e2);border-right:1px solid #c0c0c0;border-bottom:1px solid #b4b4b4"></div>
<svg class="ab" style="left:702.86px;top:75px" width="16" height="16" viewBox="-0.8 -0.8 17.6 17.6"><circle cx="7" cy="6.5" r="5.4" fill="none" stroke="url(#spk)" stroke-width=".7" stroke-dasharray="1 1" opacity=".8"/><circle cx="7" cy="6.5" r="4.3" fill="#a4a4a4" stroke="#181818" stroke-width="1.5"/><circle cx="6" cy="5.5" r="1.1" fill="#e4e4e4"/><path d="M14 1.5 V9" stroke="#0a1a8c" stroke-width="2.2"/><rect x="13" y="10.5" width="2.2" height="2" fill="#0a1a8c"/><path d="M3 12 H12" stroke="#20c020" stroke-width="1.4"/><path d="M3 14.5 H12" stroke="#e01818" stroke-width="1.8"/></svg>
<div class="ab" style="left:721.14px;top:73px;width:18.2px;height:20px;background:linear-gradient(#fbfbfb,#ededed 60%,#e2e2e2);border-right:1px solid #c0c0c0;border-bottom:1px solid #b4b4b4"></div>
<svg class="ab" style="left:722.25px;top:75px" width="16" height="16" viewBox="-0.8 -0.8 17.6 17.6"><circle cx="8" cy="8" r="7" fill="#e8d000"/><circle cx="8" cy="8" r="5.3" fill="#0a1a8c"/><path d="M8 4 V8.5 H5" stroke="#e8d000" stroke-width="1.4" fill="none"/></svg>
<svg class="ab" style="left:741.63px;top:75px" width="16" height="16" viewBox="-0.8 -0.8 17.6 17.6"><path d="M1 6 L8 2 L15 6 V13 H1Z" fill="#d4d4d4" stroke="#aaaaaa" stroke-width="1"/><path d="M1 6 L8 10 L15 6" stroke="#a8a8a8" stroke-width="1.2" fill="none"/><path d="M12 12 L15 14 L12 16" stroke="#aaaaaa" fill="none"/></svg>
<div class="ab" style="left:0px;top:92.2px;width:891px;height:2.3px;background:#d4d4d4"></div>
<div class="ab" style="left:0px;top:94.4px;width:891px;height:2.8px;background:linear-gradient(#585858,#6e6e6e 60%,#8a8a8a)"></div>
<div class="ab" style="left:880px;top:97px;width:11px;height:10px;background:#e4e4e4"></div>
<div class="ab" style="left:0;top:97px;width:891px;height:446px;overflow:hidden;border-top-right-radius:7px;background:#c8c8c8"><div class="ab" style="left:0;top:0;width:889.8px;height:446px;overflow:hidden;border-top-right-radius:6px;background:#6c6c6c"><div class="ab" style="left:0;top:0;width:888.6px;height:446px;overflow:hidden;border-top-right-radius:5px;background:#d6e2ef"><div class="ab" style="left:0;top:0;width:888.6px;height:28px;background:linear-gradient(#d6e2ee,#bfcddd 8%,#c6d3e2 40%,#d0dcea 70%,#dbe6f3)"></div><div class="ab" style="left:882px;top:28px;width:6.6px;height:418px;background:linear-gradient(90deg,#dce7f3,#d2deec)"></div></div></div></div>
<div class="ab" style="left:0px;top:97px;width:2px;height:446px;background:#d3dfee"></div>
<div class="ab" style="left:2px;top:125px;width:880px;height:418px;background:#f0f0f0"></div>
<svg class="ab" style="left:3px;top:107px" width="17" height="14"><path d="M1 4 L4.5 7.5 L8 3.5 L11.5 6.5 L15.5 1.5" fill="none" stroke="#c8b000" stroke-width="2.6"/><path d="M1 4 L4.5 7.5 L8 3.5 L11.5 6.5 L15.5 1.5" fill="none" stroke="#f4e030" stroke-width="1.4"/><defs><linearGradient id="cb2" x1="0" x2="1"><stop offset="0" stop-color="#10d010"/><stop offset=".55" stop-color="#f0e000"/><stop offset="1" stop-color="#e00000"/></linearGradient></defs><rect x="1" y="10.5" width="15" height="2.5" rx="1" fill="url(#cb2)"/></svg>
<div class="t" style="left:22px;top:108px;font-size:12px;color:#8c8c94">无标题3</div>
<div class="ab" style="left:782px;top:105px;width:31.5px;height:17.5px;border:1px solid #8e9db2;border-radius:3px;background:linear-gradient(#d4e0ec,#c6d4e4)"></div>
<div class="ab" style="left:815.5px;top:105px;width:31.5px;height:17.5px;border:1px solid #8e9db2;border-radius:3px;background:linear-gradient(#d4e0ec,#c6d4e4)"></div>
<div class="ab" style="left:849px;top:105px;width:31.5px;height:17.5px;border:1px solid #8e9db2;border-radius:3px;background:linear-gradient(#d4e0ec,#c6d4e4)"></div>
<div class="ab" style="left:791px;top:113px;width:12px;height:6px;background:#fff;border:1px solid #555;border-radius:2px"></div>
<div class="ab" style="left:825.5px;top:107.5px;width:11px;height:11px;background:#f4f4f4;border:1px solid #555;border-radius:1.5px"></div>
<div class="ab" style="left:829px;top:111px;width:4px;height:3px;border:1px solid #667"></div>
<svg class="ab" style="left:857px;top:106px" width="16" height="15"><path d="M4 3.5 L12 11.5 M12 3.5 L4 11.5" stroke="#606060" stroke-width="3.2" stroke-linecap="round"/><path d="M4 3.5 L12 11.5 M12 3.5 L4 11.5" stroke="#ffffff" stroke-width="1.7" stroke-linecap="round"/></svg>
<div class="ab" style="left:14px;top:125px;width:851px;height:2px;background:#a8a8a0"></div>
<div class="ab" style="left:14px;top:125px;width:2.5px;height:399px;background:#aca49c"></div>
<div class="ab" style="left:16px;top:127px;width:1.5px;height:373px;background:#00d8e8"></div>
<div class="ab" style="left:17px;top:127px;width:847px;height:185px;background:linear-gradient(#000080,#12129a 30%,#2323a6 50%,#12129a 70%,#000080)"></div>
<div class="ab" style="left:17px;top:312px;width:848px;height:3px;background:#8c8c8c"></div>
<div class="ab" style="left:16px;top:312px;width:8px;height:1px;background:#c8c8c8"></div>
<div class="ab" style="left:17px;top:315px;width:847px;height:184px;background:linear-gradient(#000080,#12129a 30%,#2323a6 50%,#12129a 70%,#000080)"></div>
<div class="ab" style="left:864px;top:127px;width:1.5px;height:373px;background:#20f0ff"></div>
<div class="ab" style="left:86.4px;top:127px;width:1px;height:185px;background:#7a7a8a"></div>
<div class="ab" style="left:86.4px;top:315px;width:1px;height:184px;background:#7a7a8a"></div>
<div class="ab" style="left:157.1px;top:127px;width:1px;height:185px;background:#7a7a8a"></div>
<div class="ab" style="left:157.1px;top:315px;width:1px;height:184px;background:#7a7a8a"></div>
<div class="ab" style="left:227.8px;top:127px;width:1px;height:185px;background:#7a7a8a"></div>
<div class="ab" style="left:227.8px;top:315px;width:1px;height:184px;background:#7a7a8a"></div>
<div class="ab" style="left:298.5px;top:127px;width:1px;height:185px;background:#7a7a8a"></div>
<div class="ab" style="left:298.5px;top:315px;width:1px;height:184px;background:#7a7a8a"></div>
<div class="ab" style="left:369.2px;top:127px;width:1px;height:185px;background:#7a7a8a"></div>
<div class="ab" style="left:369.2px;top:315px;width:1px;height:184px;background:#7a7a8a"></div>
<div class="ab" style="left:439.9px;top:127px;width:1px;height:185px;background:#7a7a8a"></div>
<div class="ab" style="left:439.9px;top:315px;width:1px;height:184px;background:#7a7a8a"></div>
<div class="ab" style="left:510.6px;top:127px;width:1px;height:185px;background:#7a7a8a"></div>
<div class="ab" style="left:510.6px;top:315px;width:1px;height:184px;background:#7a7a8a"></div>
<div class="ab" style="left:581.3px;top:127px;width:1px;height:185px;background:#7a7a8a"></div>
<div class="ab" style="left:581.3px;top:315px;width:1px;height:184px;background:#7a7a8a"></div>
<div class="ab" style="left:652.0px;top:127px;width:1px;height:185px;background:#7a7a8a"></div>
<div class="ab" style="left:652.0px;top:315px;width:1px;height:184px;background:#7a7a8a"></div>
<div class="ab" style="left:722.7px;top:127px;width:1px;height:185px;background:#7a7a8a"></div>
<div class="ab" style="left:722.7px;top:315px;width:1px;height:184px;background:#7a7a8a"></div>
<div class="ab" style="left:793.4px;top:127px;width:1px;height:185px;background:#7a7a8a"></div>
<div class="ab" style="left:793.4px;top:315px;width:1px;height:184px;background:#7a7a8a"></div>
<div class="ab" style="left:17px;top:172.5px;width:847px;height:1px;background:#7a7a8a"></div>
<div class="ab" style="left:17px;top:265px;width:847px;height:1px;background:#7a7a8a"></div>
<div class="ab" style="left:17px;top:360.5px;width:847px;height:1px;background:#7a7a8a"></div>
<div class="ab" style="left:17px;top:452.5px;width:847px;height:1px;background:#7a7a8a"></div>
<div class="ab" style="left:17px;top:136.2px;width:1.5px;height:1.2px;background:#70a8e8"></div>
<div class="ab" style="left:17px;top:145.5px;width:1.5px;height:1.2px;background:#70a8e8"></div>
<div class="ab" style="left:17px;top:154.8px;width:1.5px;height:1.2px;background:#70a8e8"></div>
<div class="ab" style="left:17px;top:164.0px;width:1.5px;height:1.2px;background:#70a8e8"></div>
<div class="ab" style="left:17px;top:172.5px;width:4px;height:1.2px;background:#c8c8c8"></div>
<div class="ab" style="left:17px;top:182.5px;width:1.5px;height:1.2px;background:#70a8e8"></div>
<div class="ab" style="left:17px;top:191.8px;width:1.5px;height:1.2px;background:#70a8e8"></div>
<div class="ab" style="left:17px;top:201.0px;width:1.5px;height:1.2px;background:#70a8e8"></div>
<div class="ab" style="left:17px;top:210.2px;width:1.5px;height:1.2px;background:#70a8e8"></div>
<div class="ab" style="left:17px;top:218.5px;width:4px;height:1.2px;background:#c8c8c8"></div>
<div class="ab" style="left:17px;top:228.8px;width:1.5px;height:1.2px;background:#70a8e8"></div>
<div class="ab" style="left:17px;top:238.0px;width:1.5px;height:1.2px;background:#70a8e8"></div>
<div class="ab" style="left:17px;top:247.2px;width:1.5px;height:1.2px;background:#70a8e8"></div>
<div class="ab" style="left:17px;top:256.5px;width:1.5px;height:1.2px;background:#70a8e8"></div>
<div class="ab" style="left:17px;top:264.5px;width:4px;height:1.2px;background:#c8c8c8"></div>
<div class="ab" style="left:17px;top:275.0px;width:1.5px;height:1.2px;background:#70a8e8"></div>
<div class="ab" style="left:17px;top:284.2px;width:1.5px;height:1.2px;background:#70a8e8"></div>
<div class="ab" style="left:17px;top:293.5px;width:1.5px;height:1.2px;background:#70a8e8"></div>
<div class="ab" style="left:17px;top:302.8px;width:1.5px;height:1.2px;background:#70a8e8"></div>
<div class="ab" style="left:17px;top:324.2px;width:1.5px;height:1.2px;background:#70a8e8"></div>
<div class="ab" style="left:17px;top:333.5px;width:1.5px;height:1.2px;background:#70a8e8"></div>
<div class="ab" style="left:17px;top:342.8px;width:1.5px;height:1.2px;background:#70a8e8"></div>
<div class="ab" style="left:17px;top:352.0px;width:1.5px;height:1.2px;background:#70a8e8"></div>
<div class="ab" style="left:17px;top:360.5px;width:4px;height:1.2px;background:#c8c8c8"></div>
<div class="ab" style="left:17px;top:370.5px;width:1.5px;height:1.2px;background:#70a8e8"></div>
<div class="ab" style="left:17px;top:379.8px;width:1.5px;height:1.2px;background:#70a8e8"></div>
<div class="ab" style="left:17px;top:389.0px;width:1.5px;height:1.2px;background:#70a8e8"></div>
<div class="ab" style="left:17px;top:398.2px;width:1.5px;height:1.2px;background:#70a8e8"></div>
<div class="ab" style="left:17px;top:406.5px;width:4px;height:1.2px;background:#c8c8c8"></div>
<div class="ab" style="left:17px;top:416.8px;width:1.5px;height:1.2px;background:#70a8e8"></div>
<div class="ab" style="left:17px;top:426.0px;width:1.5px;height:1.2px;background:#70a8e8"></div>
<div class="ab" style="left:17px;top:435.2px;width:1.5px;height:1.2px;background:#70a8e8"></div>
<div class="ab" style="left:17px;top:444.5px;width:1.5px;height:1.2px;background:#70a8e8"></div>
<div class="ab" style="left:17px;top:452.5px;width:4px;height:1.2px;background:#c8c8c8"></div>
<div class="ab" style="left:17px;top:463.0px;width:1.5px;height:1.2px;background:#70a8e8"></div>
<div class="ab" style="left:17px;top:472.2px;width:1.5px;height:1.2px;background:#70a8e8"></div>
<div class="ab" style="left:17px;top:481.5px;width:1.5px;height:1.2px;background:#70a8e8"></div>
<div class="ab" style="left:17px;top:490.8px;width:1.5px;height:1.2px;background:#70a8e8"></div>
<div class="t" style="left:23px;top:130px;font-size:11px;color:#c4c4dc">1.0</div>
<div class="t" style="left:23px;top:176px;font-size:11px;color:#c4c4dc">0.5</div>
<div class="t" style="left:23px;top:222px;font-size:11px;color:#c4c4dc">0.0</div>
<div class="t" style="left:22px;top:268px;font-size:11px;color:#c4c4dc">-0.5</div>
<div class="t" style="left:23px;top:318px;font-size:11px;color:#c4c4dc">1.0</div>
<div class="t" style="left:23px;top:364px;font-size:11px;color:#c4c4dc">0.5</div>
<div class="t" style="left:23px;top:410px;font-size:11px;color:#c4c4dc">0.0</div>
<div class="t" style="left:22px;top:456px;font-size:11px;color:#c4c4dc">-0.5</div>
<div class="ab" style="left:17px;top:219px;width:811px;height:1px;background:repeating-linear-gradient(90deg,#c4d4c4 0 3.5px,#207820 3.5px 5.2px)"></div>
<div class="ab" style="left:828px;top:219px;width:36px;height:1px;background:repeating-linear-gradient(90deg,#b8b8c8 0 3.5px,transparent 3.5px 5.2px)"></div>
<div class="ab" style="left:17px;top:215.2px;width:811px;height:3.6px;background:#00ff00"></div>
<div class="ab" style="left:828px;top:218px;width:36px;height:1px;background:#00e000"></div>
<div class="ab" style="left:17px;top:405.7px;width:847px;height:1.5px;background:repeating-linear-gradient(90deg,#ff5a40 0 3.5px,#e02818 3.5px 5.2px)"></div>
<div class="ab" style="left:17px;top:407.2px;width:847px;height:1px;background:repeating-linear-gradient(90deg,#98a4d8 0 3.5px,transparent 3.5px 5.2px)"></div>
<div class="ab" style="left:833.5px;top:127px;width:1.3px;height:372px;background:#d8d000"></div>
<div class="ab" style="left:834.8px;top:127px;width:0.8px;height:372px;background:#101010"></div>
<div class="ab" style="left:16px;top:499px;width:849px;height:2.5px;background:#dcdcdc"></div>
<div class="ab" style="left:16px;top:501.5px;width:849px;height:7px;background:#000"></div>
<div class="ab" style="left:16px;top:508.5px;width:849px;height:15px;background:#f0f0f0"></div>
<div class="ab" style="left:15.7px;top:509px;width:1px;height:6px;background:#303030"></div>
<div class="ab" style="left:29.74px;top:509.6px;width:1.2px;height:1.6px;background:#303030"></div>
<div class="ab" style="left:43.88px;top:509.6px;width:1.2px;height:1.6px;background:#303030"></div>
<div class="ab" style="left:58.02px;top:509.6px;width:1.2px;height:1.6px;background:#303030"></div>
<div class="ab" style="left:72.16px;top:509.6px;width:1.2px;height:1.6px;background:#303030"></div>
<div class="ab" style="left:86.4px;top:509px;width:1px;height:6px;background:#303030"></div>
<div class="ab" style="left:86.4px;top:501.5px;width:1px;height:7px;background:#505050"></div>
<div class="ab" style="left:100.44px;top:509.6px;width:1.2px;height:1.6px;background:#303030"></div>
<div class="ab" style="left:114.58px;top:509.6px;width:1.2px;height:1.6px;background:#303030"></div>
<div class="ab" style="left:128.72px;top:509.6px;width:1.2px;height:1.6px;background:#303030"></div>
<div class="ab" style="left:142.86px;top:509.6px;width:1.2px;height:1.6px;background:#303030"></div>
<div class="ab" style="left:157.1px;top:509px;width:1px;height:6px;background:#303030"></div>
<div class="ab" style="left:157.1px;top:501.5px;width:1px;height:7px;background:#505050"></div>
<div class="ab" style="left:171.14px;top:509.6px;width:1.2px;height:1.6px;background:#303030"></div>
<div class="ab" style="left:185.28px;top:509.6px;width:1.2px;height:1.6px;background:#303030"></div>
<div class="ab" style="left:199.42px;top:509.6px;width:1.2px;height:1.6px;background:#303030"></div>
<div class="ab" style="left:213.56px;top:509.6px;width:1.2px;height:1.6px;background:#303030"></div>
<div class="ab" style="left:227.8px;top:509px;width:1px;height:6px;background:#303030"></div>
<div class="ab" style="left:227.8px;top:501.5px;width:1px;height:7px;background:#505050"></div>
<div class="ab" style="left:241.84px;top:509.6px;width:1.2px;height:1.6px;background:#303030"></div>
<div class="ab" style="left:255.98px;top:509.6px;width:1.2px;height:1.6px;background:#303030"></div>
<div class="ab" style="left:270.12px;top:509.6px;width:1.2px;height:1.6px;background:#303030"></div>
<div class="ab" style="left:284.26px;top:509.6px;width:1.2px;height:1.6px;background:#303030"></div>
<div class="ab" style="left:298.5px;top:509px;width:1px;height:6px;background:#303030"></div>
<div class="ab" style="left:298.5px;top:501.5px;width:1px;height:7px;background:#505050"></div>
<div class="ab" style="left:312.54px;top:509.6px;width:1.2px;height:1.6px;background:#303030"></div>
<div class="ab" style="left:326.68px;top:509.6px;width:1.2px;height:1.6px;background:#303030"></div>
<div class="ab" style="left:340.82px;top:509.6px;width:1.2px;height:1.6px;background:#303030"></div>
<div class="ab" style="left:354.96px;top:509.6px;width:1.2px;height:1.6px;background:#303030"></div>
<div class="ab" style="left:369.2px;top:509px;width:1px;height:6px;background:#303030"></div>
<div class="ab" style="left:369.2px;top:501.5px;width:1px;height:7px;background:#505050"></div>
<div class="ab" style="left:383.24px;top:509.6px;width:1.2px;height:1.6px;background:#303030"></div>
<div class="ab" style="left:397.38px;top:509.6px;width:1.2px;height:1.6px;background:#303030"></div>
<div class="ab" style="left:411.52px;top:509.6px;width:1.2px;height:1.6px;background:#303030"></div>
<div class="ab" style="left:425.66px;top:509.6px;width:1.2px;height:1.6px;background:#303030"></div>
<div class="ab" style="left:439.9px;top:509px;width:1px;height:6px;background:#303030"></div>
<div class="ab" style="left:439.9px;top:501.5px;width:1px;height:7px;background:#505050"></div>
<div class="ab" style="left:453.94px;top:509.6px;width:1.2px;height:1.6px;background:#303030"></div>
<div class="ab" style="left:468.08px;top:509.6px;width:1.2px;height:1.6px;background:#303030"></div>
<div class="ab" style="left:482.22px;top:509.6px;width:1.2px;height:1.6px;background:#303030"></div>
<div class="ab" style="left:496.36px;top:509.6px;width:1.2px;height:1.6px;background:#303030"></div>
<div class="ab" style="left:510.6px;top:509px;width:1px;height:6px;background:#303030"></div>
<div class="ab" style="left:510.6px;top:501.5px;width:1px;height:7px;background:#505050"></div>
<div class="ab" style="left:524.64px;top:509.6px;width:1.2px;height:1.6px;background:#303030"></div>
<div class="ab" style="left:538.78px;top:509.6px;width:1.2px;height:1.6px;background:#303030"></div>
<div class="ab" style="left:552.92px;top:509.6px;width:1.2px;height:1.6px;background:#303030"></div>
<div class="ab" style="left:567.06px;top:509.6px;width:1.2px;height:1.6px;background:#303030"></div>
<div class="ab" style="left:581.3px;top:509px;width:1px;height:6px;background:#303030"></div>
<div class="ab" style="left:581.3px;top:501.5px;width:1px;height:7px;background:#505050"></div>
<div class="ab" style="left:595.34px;top:509.6px;width:1.2px;height:1.6px;background:#303030"></div>
<div class="ab" style="left:609.48px;top:509.6px;width:1.2px;height:1.6px;background:#303030"></div>
<div class="ab" style="left:623.62px;top:509.6px;width:1.2px;height:1.6px;background:#303030"></div>
<div class="ab" style="left:637.76px;top:509.6px;width:1.2px;height:1.6px;background:#303030"></div>
<div class="ab" style="left:652.0px;top:509px;width:1px;height:6px;background:#303030"></div>
<div class="ab" style="left:652.0px;top:501.5px;width:1px;height:7px;background:#505050"></div>
<div class="ab" style="left:666.04px;top:509.6px;width:1.2px;height:1.6px;background:#303030"></div>
<div class="ab" style="left:680.18px;top:509.6px;width:1.2px;height:1.6px;background:#303030"></div>
<div class="ab" style="left:694.32px;top:509.6px;width:1.2px;height:1.6px;background:#303030"></div>
<div class="ab" style="left:708.46px;top:509.6px;width:1.2px;height:1.6px;background:#303030"></div>
<div class="ab" style="left:722.7px;top:509px;width:1px;height:6px;background:#303030"></div>
<div class="ab" style="left:722.7px;top:501.5px;width:1px;height:7px;background:#505050"></div>
<div class="ab" style="left:736.74px;top:509.6px;width:1.2px;height:1.6px;background:#303030"></div>
<div class="ab" style="left:750.88px;top:509.6px;width:1.2px;height:1.6px;background:#303030"></div>
<div class="ab" style="left:765.02px;top:509.6px;width:1.2px;height:1.6px;background:#303030"></div>
<div class="ab" style="left:779.16px;top:509.6px;width:1.2px;height:1.6px;background:#303030"></div>
<div class="ab" style="left:793.4px;top:509px;width:1px;height:6px;background:#303030"></div>
<div class="ab" style="left:793.4px;top:501.5px;width:1px;height:7px;background:#505050"></div>
<div class="ab" style="left:807.44px;top:509.6px;width:1.2px;height:1.6px;background:#303030"></div>
<div class="ab" style="left:821.58px;top:509.6px;width:1.2px;height:1.6px;background:#303030"></div>
<div class="ab" style="left:835.72px;top:509.6px;width:1.2px;height:1.6px;background:#303030"></div>
<div class="ab" style="left:849.86px;top:509.6px;width:1.2px;height:1.6px;background:#303030"></div>
<div class="ab" style="left:864.1px;top:509px;width:1px;height:6px;background:#303030"></div>
<div class="t" style="left:16.7px;top:514px;font-size:10px;color:#141414">00:00:00</div>
<div class="t" style="left:87.4px;top:514px;font-size:10px;color:#141414">00:00:05</div>
<div class="t" style="left:158.1px;top:514px;font-size:10px;color:#141414">00:00:10</div>
<div class="t" style="left:228.8px;top:514px;font-size:10px;color:#141414">00:00:15</div>
<div class="t" style="left:299.5px;top:514px;font-size:10px;color:#141414">00:00:20</div>
<div class="t" style="left:370.2px;top:514px;font-size:10px;color:#141414">00:00:25</div>
<div class="t" style="left:440.9px;top:514px;font-size:10px;color:#141414">00:00:30</div>
<div class="t" style="left:511.6px;top:514px;font-size:10px;color:#141414">00:00:35</div>
<div class="t" style="left:582.3px;top:514px;font-size:10px;color:#141414">00:00:40</div>
<div class="t" style="left:653.0px;top:514px;font-size:10px;color:#141414">00:00:45</div>
<div class="t" style="left:723.7px;top:514px;font-size:10px;color:#141414">00:00:50</div>
<div class="t" style="left:794.4px;top:514px;font-size:10px;color:#141414">00:00:55</div>
<div class="ab" style="left:14px;top:523px;width:851px;height:2px;background:#fafafa"></div>
<div class="ab" style="left:14px;top:525.2px;width:851px;height:2px;background:linear-gradient(#c8c8c8,#9c9c9c)"></div>
<div class="ab" style="left:14px;top:527.2px;width:851px;height:16px;background:#ececec"></div>
<div class="ab" style="left:14px;top:527px;width:2.5px;height:16px;background:#8c8c8c"></div>
<div class="ab" style="left:16.5px;top:528px;width:1.5px;height:15px;background:#00e8f8"></div>
<div class="ab" style="left:18.5px;top:529px;width:843.5px;height:14px;background:linear-gradient(#000080,#14149c 35%,#2020a4)"></div>
<div class="ab" style="left:862px;top:528px;width:2px;height:15px;background:#20f0ff"></div>
<div class="ab" style="left:18.5px;top:535.5px;width:843.5px;height:1px;background:#00e040"></div>
<div class="ab" style="left:833.5px;top:528px;width:1.3px;height:15px;background:#d8d000"></div>
<div class="ab" style="left:834.8px;top:528px;width:0.8px;height:15px;background:#101010"></div>
<div class="ab" style="left:891px;top:0px;width:37px;height:543px;background:linear-gradient(90deg,#c8c8c8 0,#e6e6e6 3px,#fbfbfb 8px,#ffffff 14px,#fafafa 24px,#e8e8e8 32px,#d4d4d4 37px)"></div>
<div class="ab" style="left:891px;top:24px;width:37px;height:1px;background:#d8d8d8"></div>
<div class="ab" style="left:891px;top:27.5px;width:37px;height:1px;background:#dcdcdc"></div>
<div class="ab" style="left:891px;top:44.5px;width:37px;height:1px;background:#c8c8c8"></div>
<div class="ab" style="left:891px;top:100px;width:37px;height:1px;background:#d8d8d8"></div>
<div class="ab" style="left:891px;top:103.5px;width:37px;height:1px;background:#dcdcdc"></div>
<div class="ab" style="left:891px;top:124.5px;width:37px;height:1px;background:#c8c8c8"></div>
<div class="ab" style="left:891px;top:178.5px;width:37px;height:1px;background:#d8d8d8"></div>
<div class="ab" style="left:891px;top:182px;width:37px;height:1px;background:#dcdcdc"></div>
<div class="ab" style="left:891px;top:203.5px;width:37px;height:1px;background:#c8c8c8"></div>
<div class="ab" style="left:892px;top:28.5px;width:36px;height:16px;background:linear-gradient(90deg,#c8c8c8,#e8e8e8 6px,#f4f4f4 12px,#f0f0f0 24px,#d8d8d8 37px)"></div>
<div class="ab" style="left:892px;top:104.5px;width:36px;height:20px;background:linear-gradient(90deg,#c8c8c8,#e8e8e8 6px,#f4f4f4 12px,#f0f0f0 24px,#d8d8d8 37px)"></div>
<div class="ab" style="left:892px;top:263px;width:36px;height:20px;background:linear-gradient(90deg,#bcbcbc,#d6d6d6 6px,#dedede 30px,#c8c8c8 37px)"></div>
<div class="t" style="left:908px;top:268px;font-size:12px;color:#8a8a8a">0 K</div>
<svg class="ab" style="left:889px;top:220px" width="4" height="6"><path d="M1 1 L3 4" stroke="#5070a0" stroke-width="1"/></svg>
<div class="ab" style="left:927px;top:0px;width:270px;height:543px;background:#f0f0f0"></div>
<div class="ab" style="left:927px;top:0px;width:1px;height:543px;background:#8c8c8c"></div>
<div class="ab" style="left:1195.5px;top:0px;width:1.5px;height:543px;background:#d8d8d8"></div>
<div class="ab" style="left:928.7px;top:1.7px;width:31px;height:25px;background:linear-gradient(#fafafa,#eeeeee 50%,#dcdcdc);border-right:1.5px solid #a8a8a8;border-bottom:1.5px solid #a0a0a0;border-top:1px solid #fff;border-left:1px solid #f8f8f8"></div>
<div class="ab" style="left:960.6px;top:1.7px;width:31px;height:25px;background:linear-gradient(#fafafa,#eeeeee 50%,#dcdcdc);border-right:1.5px solid #a8a8a8;border-bottom:1.5px solid #a0a0a0;border-top:1px solid #fff;border-left:1px solid #f8f8f8"></div>
<svg class="ab" style="left:928px;top:0" width="64" height="28"><g fill="#0000f0" stroke="#f0f0c0" stroke-width=".6"><path d="M3.8 14.5 L15.5 8.5 V20.7Z"/><path d="M15.5 14.5 L27 8.5 V20.7Z"/><path d="M36 8.5 L47.4 14.5 L36 20.6Z"/><path d="M47.4 8.5 L59 14.5 L47.4 20.6Z"/></g></svg>
<div class="ab" style="left:1000px;top:7px;width:5.5px;height:15px;background:#c4c4c4;border-radius:2px"></div>
<div class="ab" style="left:1009px;top:7px;width:5.5px;height:15px;background:#c4c4c4;border-radius:2px"></div>
<div class="ab" style="left:1032px;top:7px;width:15px;height:15px;background:#c4c4c4;border-radius:2px"></div>
<div class="ab" style="left:929px;top:31.7px;width:41px;height:25px;background:linear-gradient(#fafafa,#eeeeee 50%,#dcdcdc);border-right:1.5px solid #a8a8a8;border-bottom:1.5px solid #a0a0a0;border-top:1px solid #fff;border-left:1px solid #f8f8f8"></div>
<div class="ab" style="left:971px;top:31.7px;width:41px;height:25px;background:linear-gradient(#fafafa,#eeeeee 50%,#dcdcdc);border-right:1.5px solid #a8a8a8;border-bottom:1.5px solid #a0a0a0;border-top:1px solid #fff;border-left:1px solid #f8f8f8"></div>
<div class="ab" style="left:1013.5px;top:31.7px;width:41px;height:25px;background:linear-gradient(#fafafa,#eeeeee 50%,#dcdcdc);border-right:1.5px solid #a8a8a8;border-bottom:1.5px solid #a0a0a0;border-top:1px solid #fff;border-left:1px solid #f8f8f8"></div>
<div class="ab" style="left:942px;top:37px;width:6px;height:14.5px;background:linear-gradient(90deg,#c00000,#ff1010 40%,#e00000);border-radius:1.5px;box-shadow:1px 1px 0 #800000"></div>
<div class="ab" style="left:951px;top:37px;width:6px;height:14.5px;background:linear-gradient(90deg,#c00000,#ff1010 40%,#e00000);border-radius:1.5px;box-shadow:1px 1px 0 #800000"></div>
<div class="ab" style="left:984px;top:37px;width:14.5px;height:14.5px;background:radial-gradient(circle at 40% 35%,#ff3030,#e00000 70%,#c00000);border-radius:1.5px;box-shadow:1px 1px 0 #800000"></div>
<svg class="ab" style="left:1020px;top:37px" width="30" height="16"><circle cx="6.5" cy="7.5" r="5" fill="#e8e8e8" stroke="#909090" stroke-width="1"/><circle cx="6.5" cy="7.5" r="3" fill="#1a70c8"/><circle cx="5.7" cy="6.7" r="1.2" fill="#a0d8ff"/><rect x="14.5" y="2.5" width="11" height="11" fill="#fbfbfb" stroke="#909090" stroke-width="1"/><path d="M16.5 7.5 L19.5 11 L24 3.5" fill="none" stroke="#3050a8" stroke-width="1.5"/></svg>
<div class="ab" style="left:929px;top:62.5px;width:125px;height:26px;background:#000"></div>
<div class="t" style="left:931.3px;top:65.8px;font-size:22.4px;color:#00f800;letter-spacing:-0.35px">00:00:57.8</div>
<div class="ab" style="left:1037px;top:65.2px;width:9.2px;height:8.6px;background:#008000"></div>
<svg class="ab" style="left:1036px;top:76px" width="11" height="11"><circle cx="5.5" cy="5.2" r="4.6" fill="#880000"/><path d="M5.5 0 V10.5 M0.5 5.2 H10.5" stroke="#880000" stroke-width="1.6"/></svg>
<div class="ab" style="left:1059.5px;top:1.8px;width:135.5px;height:14px;background:#f0f0f0;border:1px solid #c8c8c8;border-right-color:#a8a8a8;border-bottom-color:#a0a0a0"></div>
<div class="ab" style="left:1060.5px;top:2.8px;width:13.5px;height:12.5px;background:#fafafa"></div>
<div class="ab" style="left:1063px;top:8.3px;width:8px;height:2px;background:#000"></div>
<div class="ab" style="left:1074px;top:2.8px;width:107px;height:12.5px;background:linear-gradient(90deg,#707070,#8c8c8c 45%,#b0b0b0 55%,#dcdcdc)"></div>
<div class="ab" style="left:1121px;top:2.8px;width:13px;height:12.5px;background:#fafafa"></div>
<div class="ab" style="left:1181px;top:2.8px;width:13.5px;height:12.5px;background:#fafafa;border-left:1px solid #d0d0d0"></div>
<div class="ab" style="left:1183.5px;top:8.3px;width:8.5px;height:2px;background:#000"></div>
<div class="ab" style="left:1186.8px;top:4.8px;width:2px;height:9px;background:#000"></div>
<svg class="ab" style="left:1121px;top:3px" width="13" height="12"><path d="M5.6 0.5 L1 6 L5.6 11.5Z" fill="#00d000"/><path d="M7.2 0.5 L11.8 6 L7.2 11.5Z" fill="#e00000"/></svg>
<div class="t" style="left:1106px;top:17.5px;font-size:11px;color:#202020">平衡: 0%</div>
<div class="ab" style="left:1059.5px;top:31.7px;width:135.5px;height:14px;background:#f0f0f0;border:1px solid #c8c8c8;border-right-color:#a8a8a8;border-bottom-color:#a0a0a0"></div>
<div class="ab" style="left:1060.5px;top:32.7px;width:13.5px;height:12.5px;background:#fafafa"></div>
<div class="ab" style="left:1063px;top:38.2px;width:8px;height:2px;background:#000"></div>
<div class="ab" style="left:1074px;top:32.7px;width:18px;height:12.5px;background:#7a7a7a"></div>
<div class="ab" style="left:1106px;top:32.7px;width:75px;height:12.5px;background:linear-gradient(90deg,#9c9c9c,#c0c0c0 60%,#dadada)"></div>
<div class="ab" style="left:1092px;top:32.7px;width:14px;height:12.5px;background:#fafafa"></div>
<div class="ab" style="left:1181px;top:32.7px;width:13.5px;height:12.5px;background:#fafafa;border-left:1px solid #d0d0d0"></div>
<div class="ab" style="left:1183.5px;top:38.2px;width:8.5px;height:2px;background:#000"></div>
<div class="ab" style="left:1186.8px;top:34.7px;width:2px;height:9px;background:#000"></div>
<svg class="ab" style="left:1093px;top:34px" width="12" height="10"><path d="M2 1 L10 9 M10 1 L2 9" stroke="#1010f0" stroke-width="1.5"/></svg>
<div class="t" style="left:1104px;top:47px;font-size:11px;color:#202020">速度: 1.00</div>
<div class="ab" style="left:1059.5px;top:62px;width:135.5px;height:27px;background:#fafafa;border:1px solid #c8c8c8"></div>
<div class="t" style="left:1062.5px;top:65.5px;font-size:7.5px;font-weight:bold;color:#000">L</div>
<div class="t" style="left:1062px;top:78.5px;font-size:7.5px;font-weight:bold;color:#000">R</div>
<div class="ab" style="left:1069px;top:62.5px;width:117px;height:26.3px;background:linear-gradient(90deg,#006000,#2a6a00 25%,#5a7800 50%,#7c7c00 67%,#7a3c00 85%,#7c0000)"></div>
<div class="ab" style="left:1069px;top:62.5px;width:3.5px;height:13.5px;background:#00d000"></div>
<div class="ab" style="left:1188.6px;top:65px;width:3.8px;height:7.7px;background:#000"></div>
<div class="ab" style="left:1188.6px;top:78px;width:3.8px;height:8px;background:#000"></div>
<div class="ab" style="left:929px;top:95.3px;width:265.5px;height:233.89999999999998px;background:#000"></div>
<div class="ab" style="left:944px;top:106.45px;width:250.0px;height:1.3px;background:#7a7a7a"></div>
<div class="ab" style="left:942.5px;top:118px;width:251.5px;height:1px;background:#b4b4b4"></div>
<div class="ab" style="left:944px;top:128.65px;width:250.0px;height:1.3px;background:#7a7a7a"></div>
<div class="ab" style="left:942.5px;top:140px;width:251.5px;height:1px;background:#b4b4b4"></div>
<div class="ab" style="left:944px;top:150.85px;width:250.0px;height:1.3px;background:#7a7a7a"></div>
<div class="ab" style="left:942.5px;top:162px;width:251.5px;height:1px;background:#b4b4b4"></div>
<div class="ab" style="left:944px;top:173.05px;width:250.0px;height:1.3px;background:#7a7a7a"></div>
<div class="ab" style="left:942.5px;top:184px;width:251.5px;height:1px;background:#b4b4b4"></div>
<div class="ab" style="left:944px;top:195.25px;width:250.0px;height:1.3px;background:#7a7a7a"></div>
<div class="ab" style="left:942.5px;top:206px;width:251.5px;height:1px;background:#b4b4b4"></div>
<div class="ab" style="left:944px;top:217.45px;width:250.0px;height:1.3px;background:#7a7a7a"></div>
<div class="ab" style="left:942.5px;top:229px;width:251.5px;height:1px;background:#b4b4b4"></div>
<div class="ab" style="left:944px;top:239.65px;width:250.0px;height:1.3px;background:#7a7a7a"></div>
<div class="ab" style="left:942.5px;top:251px;width:251.5px;height:1px;background:#b4b4b4"></div>
<div class="ab" style="left:944px;top:261.85px;width:250.0px;height:1.3px;background:#7a7a7a"></div>
<div class="ab" style="left:942.5px;top:273px;width:251.5px;height:1px;background:#b4b4b4"></div>
<div class="ab" style="left:944px;top:284.05px;width:250.0px;height:1.3px;background:#7a7a7a"></div>
<div class="ab" style="left:942.5px;top:295px;width:251.5px;height:1px;background:#b4b4b4"></div>
<div class="ab" style="left:944px;top:306.25px;width:250.0px;height:1.3px;background:#7a7a7a"></div>
<div class="ab" style="left:946px;top:95.5px;width:1px;height:223px;background:repeating-linear-gradient(#e0e0e0 0 1px,#707070 1px 2.2px)"></div>
<div class="ab" style="left:947px;top:95.5px;width:0.6px;height:223px;background:#606060"></div>
<div class="t" style="left:920px;top:97.2px;width:25px;text-align:right;font-size:8px;letter-spacing:-0.4px;color:#e8e8e8">0</div>
<div class="t" style="left:920px;top:119.4px;width:25px;text-align:right;font-size:8px;letter-spacing:-0.4px;color:#e8e8e8">-10</div>
<div class="t" style="left:920px;top:141.6px;width:25px;text-align:right;font-size:8px;letter-spacing:-0.4px;color:#e8e8e8">-20</div>
<div class="t" style="left:920px;top:163.8px;width:25px;text-align:right;font-size:8px;letter-spacing:-0.4px;color:#e8e8e8">-30</div>
<div class="t" style="left:920px;top:186.0px;width:25px;text-align:right;font-size:8px;letter-spacing:-0.4px;color:#e8e8e8">-40</div>
<div class="t" style="left:920px;top:208.2px;width:25px;text-align:right;font-size:8px;letter-spacing:-0.4px;color:#e8e8e8">-50</div>
<div class="t" style="left:920px;top:230.4px;width:25px;text-align:right;font-size:8px;letter-spacing:-0.4px;color:#e8e8e8">-60</div>
<div class="t" style="left:920px;top:252.6px;width:25px;text-align:right;font-size:8px;letter-spacing:-0.4px;color:#e8e8e8">-70</div>
<div class="t" style="left:920px;top:274.8px;width:25px;text-align:right;font-size:8px;letter-spacing:-0.4px;color:#e8e8e8">-80</div>
<div class="t" style="left:920px;top:297.0px;width:25px;text-align:right;font-size:8px;letter-spacing:-0.4px;color:#e8e8e8">-90</div>
<div class="ab" style="left:949.4px;top:191.46px;width:19.800000000000068px;height:126.53999999999999px;background:#c4c4d4"></div>
<div class="ab" style="left:949.4px;top:190.96px;width:19.800000000000068px;height:1.5px;background:#ff1010"></div>
<div class="t" style="left:945.4px;top:183.0px;width:27.800000000000068px;text-align:center;font-size:8px;letter-spacing:-0.3px;color:#ff2020">43</div>
<div class="t" style="left:945.4px;top:319.5px;width:27.800000000000068px;text-align:center;font-size:8px;letter-spacing:-0.3px;color:#e8e8e8">17</div>
<div class="ab" style="left:971.4px;top:238.08px;width:19.899999999999977px;height:79.91999999999999px;background:#c4c4d4"></div>
<div class="ab" style="left:971.4px;top:237.58px;width:19.899999999999977px;height:1.5px;background:#ff1010"></div>
<div class="t" style="left:967.4px;top:229.6px;width:27.899999999999977px;text-align:center;font-size:8px;letter-spacing:-0.3px;color:#ff2020">64</div>
<div class="t" style="left:967.4px;top:319.5px;width:27.899999999999977px;text-align:center;font-size:8px;letter-spacing:-0.3px;color:#e8e8e8">35</div>
<div class="ab" style="left:993.4px;top:271.38px;width:20.600000000000023px;height:46.620000000000005px;background:#c4c4d4"></div>
<div class="ab" style="left:993.4px;top:270.88px;width:20.600000000000023px;height:1.5px;background:#ff1010"></div>
<div class="t" style="left:989.4px;top:262.9px;width:28.600000000000023px;text-align:center;font-size:8px;letter-spacing:-0.3px;color:#ff2020">79</div>
<div class="t" style="left:989.4px;top:319.5px;width:28.600000000000023px;text-align:center;font-size:8px;letter-spacing:-0.3px;color:#e8e8e8">70</div>
<div class="ab" style="left:1016.1px;top:291.36px;width:19.899999999999977px;height:26.639999999999986px;background:#c4c4d4"></div>
<div class="ab" style="left:1016.1px;top:290.86px;width:19.899999999999977px;height:1.5px;background:#ff1010"></div>
<div class="t" style="left:1012.1px;top:282.9px;width:27.899999999999977px;text-align:center;font-size:8px;letter-spacing:-0.3px;color:#ff2020">88</div>
<div class="t" style="left:1012.1px;top:319.5px;width:27.899999999999977px;text-align:center;font-size:8px;letter-spacing:-0.3px;color:#e8e8e8">140</div>
<div class="ab" style="left:1038.2px;top:284.70000000000005px;width:20.200000000000045px;height:33.299999999999955px;background:#c4c4d4"></div>
<div class="ab" style="left:1038.2px;top:284.20000000000005px;width:20.200000000000045px;height:1.5px;background:#ff1010"></div>
<div class="t" style="left:1034.2px;top:276.2px;width:28.200000000000045px;text-align:center;font-size:8px;letter-spacing:-0.3px;color:#ff2020">85</div>
<div class="t" style="left:1034.2px;top:319.5px;width:28.200000000000045px;text-align:center;font-size:8px;letter-spacing:-0.3px;color:#e8e8e8">281</div>
<div class="ab" style="left:1060px;top:298.02px;width:21px;height:19.980000000000018px;background:#c4c4d4"></div>
<div class="ab" style="left:1060px;top:297.52px;width:21px;height:1.5px;background:#ff1010"></div>
<div class="t" style="left:1056px;top:289.5px;width:29px;text-align:center;font-size:8px;letter-spacing:-0.3px;color:#ff2020">91</div>
<div class="t" style="left:1056px;top:319.5px;width:29px;text-align:center;font-size:8px;letter-spacing:-0.3px;color:#e8e8e8">562</div>
<div class="ab" style="left:1083.2px;top:304.68px;width:19.799999999999955px;height:13.319999999999993px;background:#c4c4d4"></div>
<div class="ab" style="left:1083.2px;top:304.18px;width:19.799999999999955px;height:1.5px;background:#ff1010"></div>
<div class="t" style="left:1079.2px;top:296.2px;width:27.799999999999955px;text-align:center;font-size:8px;letter-spacing:-0.3px;color:#ff2020">94</div>
<div class="t" style="left:1079.2px;top:319.5px;width:27.799999999999955px;text-align:center;font-size:8px;letter-spacing:-0.3px;color:#e8e8e8">1k</div>
<div class="ab" style="left:1105.2px;top:309.12px;width:19.799999999999955px;height:8.879999999999995px;background:#c4c4d4"></div>
<div class="ab" style="left:1105.2px;top:308.62px;width:19.799999999999955px;height:1.5px;background:#ff1010"></div>
<div class="t" style="left:1101.2px;top:300.6px;width:27.799999999999955px;text-align:center;font-size:8px;letter-spacing:-0.3px;color:#ff2020">96</div>
<div class="t" style="left:1101.2px;top:319.5px;width:27.799999999999955px;text-align:center;font-size:8px;letter-spacing:-0.3px;color:#e8e8e8">2k</div>
<div class="ab" style="left:1127.1px;top:304.68px;width:20.90000000000009px;height:13.319999999999993px;background:#c4c4d4"></div>
<div class="ab" style="left:1127.1px;top:304.18px;width:20.90000000000009px;height:1.5px;background:#ff1010"></div>
<div class="t" style="left:1123.1px;top:296.2px;width:28.90000000000009px;text-align:center;font-size:8px;letter-spacing:-0.3px;color:#ff2020">94</div>
<div class="t" style="left:1123.1px;top:319.5px;width:28.90000000000009px;text-align:center;font-size:8px;letter-spacing:-0.3px;color:#e8e8e8">4k</div>
<div class="ab" style="left:1150px;top:315.78000000000003px;width:20px;height:2.2199999999999704px;background:#c4c4d4"></div>
<div class="ab" style="left:1150px;top:315.28000000000003px;width:20px;height:1.5px;background:#ff1010"></div>
<div class="t" style="left:1146px;top:307.3px;width:28px;text-align:center;font-size:8px;letter-spacing:-0.3px;color:#ff2020">99</div>
<div class="t" style="left:1146px;top:319.5px;width:28px;text-align:center;font-size:8px;letter-spacing:-0.3px;color:#e8e8e8">9k</div>
<div class="ab" style="left:1172.2px;top:318.0px;width:20.799999999999955px;height:0.0px;background:#c4c4d4"></div>
<div class="ab" style="left:1172.2px;top:317.5px;width:20.799999999999955px;height:1.5px;background:#ff1010"></div>
<div class="t" style="left:1168.2px;top:309.5px;width:28.799999999999955px;text-align:center;font-size:8px;letter-spacing:-0.3px;color:#ff2020">99</div>
<div class="t" style="left:1168.2px;top:319.5px;width:28.799999999999955px;text-align:center;font-size:8px;letter-spacing:-0.3px;color:#e8e8e8">18k</div>
<div class="ab" style="left:942px;top:317.5px;width:252px;height:1px;background:#d0d0d0"></div>
<div class="t" style="left:930.5px;top:319.5px;font-size:8px;letter-spacing:-0.5px;color:#e8e8e8">-100</div>
<div class="ab" style="left:929px;top:329.2px;width:266px;height:6.3px;background:#f8f8f8"></div>
<div class="ab" style="left:929px;top:335.5px;width:265.5px;height:207.5px;background:#000"></div>
<div class="ab" style="left:955.4px;top:335.5px;width:1px;height:207.5px;background:#7c7c7c"></div>
<div class="ab" style="left:981.96px;top:335.5px;width:1px;height:207.5px;background:#7c7c7c"></div>
<div class="ab" style="left:1008.52px;top:335.5px;width:1px;height:207.5px;background:#7c7c7c"></div>
<div class="ab" style="left:1035.08px;top:335.5px;width:1px;height:207.5px;background:#7c7c7c"></div>
<div class="ab" style="left:1061.64px;top:335.5px;width:1px;height:207.5px;background:#7c7c7c"></div>
<div class="ab" style="left:1088.2px;top:335.5px;width:1px;height:207.5px;background:#7c7c7c"></div>
<div class="ab" style="left:1114.76px;top:335.5px;width:1px;height:207.5px;background:#7c7c7c"></div>
<div class="ab" style="left:1141.32px;top:335.5px;width:1px;height:207.5px;background:#7c7c7c"></div>
<div class="ab" style="left:1167.88px;top:335.5px;width:1px;height:207.5px;background:#7c7c7c"></div>
<div class="ab" style="left:929px;top:358.97px;width:265.5px;height:1px;background:#7c7c7c"></div>
<div class="ab" style="left:929px;top:382.44px;width:265.5px;height:1px;background:#7c7c7c"></div>
<div class="ab" style="left:929px;top:405.91px;width:265.5px;height:1px;background:#7c7c7c"></div>
<div class="ab" style="left:929px;top:429.38px;width:265.5px;height:1px;background:#7c7c7c"></div>
<div class="ab" style="left:929px;top:452.85px;width:265.5px;height:1px;background:#7c7c7c"></div>
<div class="ab" style="left:929px;top:476.32px;width:265.5px;height:1px;background:#7c7c7c"></div>
<div class="ab" style="left:929px;top:499.79px;width:265.5px;height:1px;background:#7c7c7c"></div>
<div class="ab" style="left:929px;top:523.26px;width:265.5px;height:1px;background:#7c7c7c"></div>
<div class="ab" style="left:1065.5px;top:453px;width:1.2px;height:1.2px;background:#e0e000"></div>
<div class="ab" style="left:1197px;top:0px;width:33px;height:543px;background:#fff"></div>
<div class="ab" style="left:1197px;top:0px;width:33px;height:45px;background:#226fe6"></div>
<div class="ab" style="left:1223px;top:58.5px;width:7px;height:1px;background:#606060"></div>
<div class="ab" style="left:1197px;top:98.5px;width:33px;height:1px;background:#dcdcdc"></div>
<div class="ab" style="left:1197px;top:102.5px;width:33px;height:1px;background:#e4e4e4"></div>
<div class="ab" style="left:1197px;top:125px;width:33px;height:1px;background:#e4e4e4"></div>
<div class="t" style="left:1195.5px;top:107px;font-size:15px;color:#6c6c6c">tMicM</div>
<div class="ab" style="left:1203px;top:129px;width:1px;height:28px;background:#e0e0e0"></div>
<div class="t" style="left:1208.5px;top:138px;font-size:13px;color:#4f6e9c">大小</div>
<div class="ab" style="left:1197px;top:184px;width:33px;height:20px;background:#d9d9d9"></div>
<div class="ab" style="left:1196px;top:0px;width:10px;height:543px;background:linear-gradient(90deg,rgba(0,0,0,.28),rgba(0,0,0,.08) 3px,rgba(0,0,0,0) 9px)"></div>
</body></html>
